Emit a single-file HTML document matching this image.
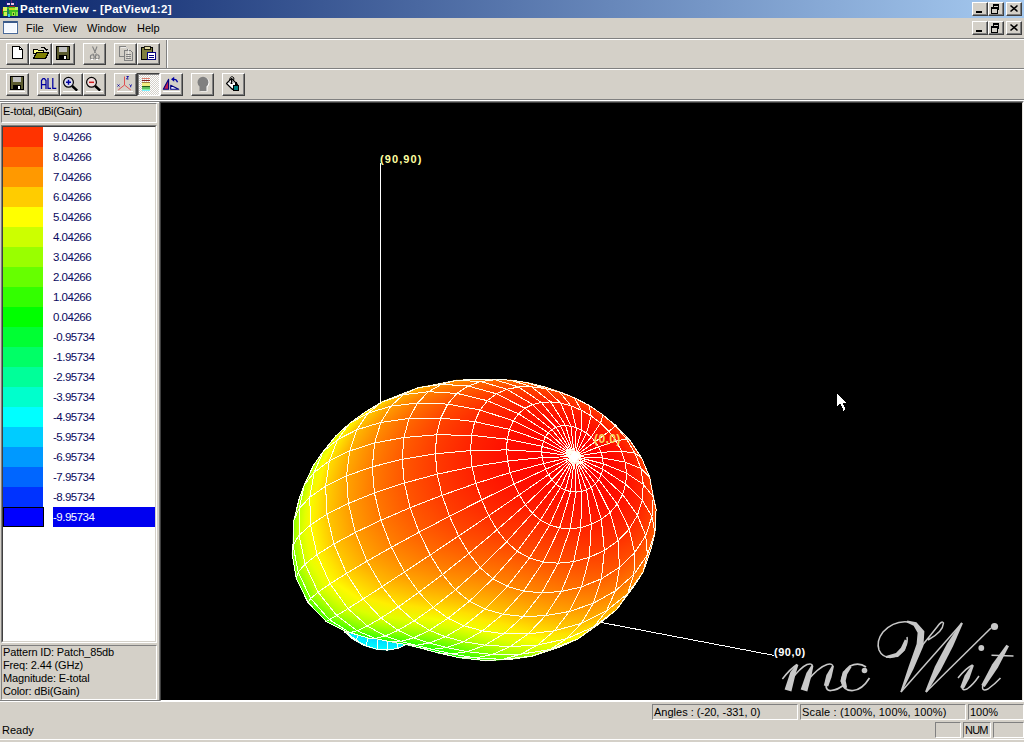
<!DOCTYPE html><html><head><meta charset="utf-8"><style>
*{margin:0;padding:0;box-sizing:border-box}
html,body{width:1024px;height:742px;overflow:hidden;background:#d4d0c8}
body{position:relative;font-family:'Liberation Sans',sans-serif;font-size:11px;color:#000}
.a{position:absolute}
.t{position:absolute;white-space:nowrap;line-height:12px}
.btn{position:absolute;border:1px solid;border-color:#fff #404040 #404040 #fff;box-shadow:inset -1px -1px #808080;background:#d4d0c8}
.cbtn{position:absolute;width:16px;height:14px;border:1px solid;border-color:#fff #404040 #404040 #fff;box-shadow:inset -1px -1px #808080;background:#d4d0c8}
.hl{position:absolute;height:1px}
.sunk{position:absolute;border:1px solid;border-color:#808080 #fff #fff #808080}
svg{position:absolute;overflow:visible}
.g{fill:none;stroke:#fffff0;stroke-width:1;shape-rendering:crispEdges}
.th{fill:none;stroke:#c8c8c8;stroke-width:1.5}
.c{fill:none;stroke:#c8c8c8;stroke-width:1.7}
.cthick{fill:none;stroke:#c8c8c8;stroke-width:3.5}
</style></head><body>
<div class="a" style="left:0;top:0;width:1024px;height:18px;background:linear-gradient(to right,#0a246a,#a6caf0)"></div>
<svg style="left:1px;top:0px" width="18" height="18" viewBox="0 0 18 18" shape-rendering="crispEdges">
<rect x="5" y="1" width="1" height="4" fill="#2a1a8a"/><rect x="10" y="0" width="1" height="5" fill="#5a2070"/><rect x="15" y="1" width="1" height="4" fill="#1a1a9a"/>
<rect x="6" y="3" width="3" height="2" fill="#f0d0f0"/><rect x="10" y="3" width="3" height="2" fill="#f0c0e0"/>
<rect x="8" y="6" width="6" height="2" fill="#a02020"/>
<rect x="2" y="7" width="15" height="9" fill="#40c020"/>
<rect x="2" y="7" width="4" height="4" fill="#e0f060"/><rect x="14" y="7" width="3" height="3" fill="#c0f060"/>
<rect x="8" y="8" width="6" height="2" fill="#c0e020"/>
<rect x="3" y="12" width="4" height="4" fill="#d0f050"/><rect x="6" y="9" width="2" height="7" fill="#208060"/><rect x="7" y="14" width="2" height="3" fill="#40c0e0"/>
<rect x="11" y="12" width="3" height="4" fill="#a0e040"/><rect x="12" y="13" width="1" height="2" fill="#106010"/>
<rect x="15" y="12" width="2" height="4" fill="#80e040"/><rect x="1" y="9" width="1" height="5" fill="#702020"/>
</svg>
<div class="t" style="left:20px;top:3px;font-weight:bold;font-size:11.5px;letter-spacing:.3px;color:#fff">PatternView - [PatView1:2]</div>
<div class="cbtn" style="left:972px;top:2px"></div><svg style="left:972px;top:2px" width="16" height="14" shape-rendering="crispEdges"><rect x="4" y="9" width="6" height="2" fill="#000"/></svg><div class="cbtn" style="left:988px;top:2px"></div><svg style="left:988px;top:2px" width="16" height="14" shape-rendering="crispEdges"><path d="M5 2h6v6h-2v-1h1v-3h-4v1h-1z" fill="#000"/><rect x="3" y="5" width="6" height="6" fill="none" stroke="#000" stroke-width="1" transform="translate(.5 .5)"/><rect x="3" y="5" width="6" height="1" fill="#000"/><rect x="3" y="5.5" width="6.5" height="1" fill="#000"/></svg><div class="cbtn" style="left:1006px;top:2px"></div><svg style="left:1006px;top:2px" width="16" height="14"><path d="M4.5 3.5l7 6M11.5 3.5l-7 6" stroke="#000" stroke-width="1.6"/></svg>
<svg style="left:1px;top:20px" width="18" height="15" shape-rendering="crispEdges">
<rect x="2" y="1" width="14" height="12" fill="#fff" stroke="#4a6a9a"/><rect x="2" y="1" width="14" height="2" fill="#3a5a8a"/><rect x="3" y="3" width="12" height="9" fill="#f4f8ff"/>
</svg>
<div class="t" style="left:26px;top:22px">File</div>
<div class="t" style="left:53px;top:22px">View</div>
<div class="t" style="left:87px;top:22px">Window</div>
<div class="t" style="left:137px;top:22px">Help</div>
<div class="cbtn" style="left:972px;top:21px"></div><svg style="left:972px;top:21px" width="16" height="14" shape-rendering="crispEdges"><rect x="4" y="9" width="6" height="2" fill="#000"/></svg><div class="cbtn" style="left:988px;top:21px"></div><svg style="left:988px;top:21px" width="16" height="14" shape-rendering="crispEdges"><path d="M5 2h6v6h-2v-1h1v-3h-4v1h-1z" fill="#000"/><rect x="3" y="5" width="6" height="6" fill="none" stroke="#000" stroke-width="1" transform="translate(.5 .5)"/><rect x="3" y="5" width="6" height="1" fill="#000"/><rect x="3" y="5.5" width="6.5" height="1" fill="#000"/></svg><div class="cbtn" style="left:1006px;top:21px"></div><svg style="left:1006px;top:21px" width="16" height="14"><path d="M4.5 3.5l7 6M11.5 3.5l-7 6" stroke="#000" stroke-width="1.6"/></svg>
<div class="hl" style="left:0;top:38px;width:1024px;background:#808080"></div>
<div class="hl" style="left:0;top:39px;width:1024px;background:#fff"></div>
<div class="btn" style="left:6px;top:43px;width:23px;height:22px"></div>
<div class="btn" style="left:29px;top:43px;width:23px;height:22px"></div>
<div class="btn" style="left:52px;top:43px;width:23px;height:22px"></div>
<div class="btn" style="left:83px;top:43px;width:23px;height:22px"></div>
<div class="btn" style="left:114px;top:43px;width:23px;height:22px"></div>
<div class="btn" style="left:137px;top:43px;width:23px;height:22px"></div>
<div class="a" style="left:166px;top:40px;width:1px;height:28px;background:#808080"></div>
<div class="a" style="left:167px;top:40px;width:1px;height:28px;background:#fff"></div>
<div class="hl" style="left:0;top:68px;width:1024px;background:#808080"></div>
<div class="hl" style="left:0;top:69px;width:1024px;background:#fff"></div>
<svg style="left:0;top:0" width="260" height="100" shape-rendering="crispEdges">
<!-- new -->
<path d="M12.5 46.5h7l3 3v9h-10z" fill="#fff" stroke="#000"/><path d="M19.5 46.5v3h3" fill="none" stroke="#000"/>
<!-- open -->
<path d="M33.5 49.5h4l1 1h5v3h-10z" fill="#ffff80" stroke="#000"/>
<path d="M33.5 58.5l3-6h12l-3 6z" fill="#808000" stroke="#000"/>
<path d="M41 47.5h3l2 2" fill="none" stroke="#000"/><path d="M45 49h3l-1.5 2z" fill="#000"/>
<!-- save -->
<rect x="56.5" y="46.5" width="13" height="13" fill="#5c5c30" stroke="#000"/>
<rect x="59" y="47" width="8" height="5" fill="#c0c0c0"/><rect x="59" y="55" width="8" height="5" fill="#000"/><rect x="64" y="56" width="2" height="3" fill="#fff"/>
<!-- cut disabled -->
<g shape-rendering="auto"><path d="M92.5 46.5l3 6.5M97 46.5l-2.5 6.5" stroke="#808080" stroke-width="1.1" fill="none"/>
<ellipse cx="92.3" cy="57" rx="1.9" ry="2.3" fill="none" stroke="#808080" stroke-width="1.1"/><ellipse cx="97.3" cy="57" rx="1.9" ry="2.3" fill="none" stroke="#808080" stroke-width="1.1"/>
<path d="M93 53.5l1 1.5M96.5 53.5l-1 1.5" stroke="#808080"/>
<path d="M91 59.5h2.5M96 59.5h2.5" stroke="#fff" stroke-width="1"/></g>
<!-- copy disabled -->
<path d="M119.5 46.5h6l2 2v8h-8z" fill="none" stroke="#808080"/><path d="M124.5 50.5h6l2 2v8h-8z" fill="#d4d0c8" stroke="#808080"/>
<path d="M120.5 47.5h6l2 2v8" fill="none" stroke="#fff" opacity=".6"/><path d="M126 54h5M126 56h5M126 58h5" stroke="#808080"/>
<!-- paste -->
<rect x="141.5" y="47.5" width="11" height="12" fill="#808040" stroke="#000"/><rect x="144" y="46" width="6" height="3" fill="#e0d8a0" stroke="#000" stroke-width=".8"/>
<rect x="147.5" y="52.5" width="8" height="7" fill="#fff" stroke="#000080"/><path d="M149 55h5M149 57h5" stroke="#000080"/>
</svg>
<div class="btn" style="left:6px;top:73px;width:23px;height:23px"></div>
<div class="btn" style="left:37px;top:73px;width:23px;height:23px"></div>
<div class="btn" style="left:60px;top:73px;width:23px;height:23px"></div>
<div class="btn" style="left:83px;top:73px;width:23px;height:23px"></div>
<div class="btn" style="left:114px;top:73px;width:23px;height:23px"></div>
<div class="btn" style="left:160px;top:73px;width:23px;height:23px"></div>
<div class="btn" style="left:191px;top:73px;width:23px;height:23px"></div>
<div class="btn" style="left:222px;top:73px;width:23px;height:23px"></div>
<div class="a" style="left:137px;top:73px;width:23px;height:23px;border:1px solid;border-color:#404040 #fff #fff #404040;box-shadow:inset 1px 1px #808080;background-color:#fff;background-image:linear-gradient(45deg,#d4d0c8 25%,transparent 25%,transparent 75%,#d4d0c8 75%),linear-gradient(45deg,#d4d0c8 25%,transparent 25%,transparent 75%,#d4d0c8 75%);background-size:2px 2px;background-position:0 0,1px 1px"></div>
<div class="hl" style="left:0;top:99px;width:1024px;background:#808080"></div>
<div class="hl" style="left:0;top:100px;width:1024px;background:#fff"></div>
<svg style="left:0;top:0" width="260" height="100" shape-rendering="crispEdges">
<!-- save2 -->
<rect x="10.5" y="76.5" width="13" height="13" fill="#5c5c30" stroke="#000"/>
<rect x="13" y="77" width="8" height="5" fill="#c0c0c0"/><rect x="13" y="85" width="8" height="5" fill="#000"/><rect x="18" y="86" width="2" height="3" fill="#fff"/>
<rect x="9" y="91" width="16" height="1" fill="#fff"/>
<!-- ALL -->
<g shape-rendering="auto" fill="none" stroke="#0000a0" stroke-width="1.25">
<path d="M41.5 89V80.5l1.5-2h1.5l1.5 2V89M41.5 84.5h4.5"/><path d="M48 78v10.3h3"/><path d="M52.8 78v10.3h3.5"/></g>
<rect x="40" y="91" width="17" height="1" fill="#fff"/>
<!-- zoom+ -->
<g shape-rendering="auto"><circle cx="68.5" cy="82.3" r="4.9" fill="#dcdcf0" stroke="#000" stroke-width="1.2"/>
<path d="M72.2 86l5 4.6" stroke="#000" stroke-width="2.4"/><path d="M66 82.3h5M68.5 79.8v5" stroke="#0000a0" stroke-width="1.5"/></g>
<rect x="63" y="91" width="17" height="1" fill="#fff"/>
<!-- zoom- -->
<g shape-rendering="auto"><circle cx="91.5" cy="82.3" r="4.9" fill="#f0dcdc" stroke="#000" stroke-width="1.2"/>
<path d="M95.2 86l5 4.6" stroke="#000" stroke-width="2.4"/><path d="M89 82.3h5" stroke="#d02020" stroke-width="1.5"/></g>
<rect x="86" y="91" width="17" height="1" fill="#fff"/>
<!-- axes -->
<g shape-rendering="auto"><path d="M124.5 76.5v8.5l-6.3 5M124.5 85l6.3 5" fill="none" stroke="#e05050" stroke-width="1"/>
<path d="M126.5 76.5h2l-2 2.5h2M117.5 84.5l2 2M119.5 84.5l-2 2M129.5 84.5l1.2 1.3 1.3-1.3M130.7 85.8v1.5" fill="none" stroke="#0000a0" stroke-width=".9"/></g>
<rect x="117" y="91" width="16" height="1" fill="#fff"/>
<!-- legend bars -->
<rect x="142" y="78" width="8" height="1" fill="#e08070"/><rect x="142" y="80" width="8" height="1" fill="#802020"/>
<rect x="142" y="82" width="8" height="1" fill="#a08040"/><rect x="142" y="83" width="8" height="3" fill="#f0f080"/>
<rect x="142" y="86" width="8" height="1" fill="#206020"/><rect x="142" y="87" width="8" height="2" fill="#60c060"/>
<rect x="142" y="89" width="8" height="1" fill="#80f0a0"/><rect x="142" y="90" width="8" height="1" fill="#80f0ff"/>
<!-- rotate -->
<g shape-rendering="auto"><path d="M163.3 89.3L168.6 79.3V89.3Z" fill="#c02050" stroke="#000080" stroke-width="1.1" stroke-linejoin="round"/>
<path d="M170.7 85.3V89.3H178.7Z" fill="#f0f0ff" stroke="#000080" stroke-width="1.1" stroke-linejoin="round"/>
<path d="M173 79.5c2-.5 3.8.3 4.5 2.8" fill="none" stroke="#0000a0" stroke-width="1.3"/><path d="M171 79.3l3.2-2.6v5z" fill="#0000a0"/></g>
<rect x="163" y="91" width="17" height="1" fill="#fff"/>
<!-- head disabled -->
<g shape-rendering="auto"><path d="M199.5 86.5a5.5 5.5 0 1 1 7 0V91h-7z" fill="#fff" transform="translate(1 .5)"/>
<path d="M199.5 86.5a5.5 5.5 0 1 1 7 0V91h-7z" fill="#808080"/></g>
<!-- paint -->
<g shape-rendering="auto"><path d="M226.5 83.5l5-5 6 6-5 5z" fill="#fff" stroke="#000" stroke-width="1.1" stroke-linejoin="round"/>
<path d="M229.5 80.5c0-3 2-4.5 3.5-3.5s1 3-.5 4.5" fill="none" stroke="#000" stroke-width="1"/>
<path d="M231.5 79v5M230 82.5l1.5 1.5 1.5-1.5" fill="none" stroke="#000" stroke-width="1"/></g>
<rect x="233.5" y="85.5" width="5" height="5" fill="#008080" stroke="#000"/><rect x="235" y="82" width="2" height="4" fill="#000"/>
</svg>
<div class="sunk" style="left:1px;top:103px;width:156px;height:20px"></div>
<div class="t" style="left:3px;top:105px;letter-spacing:-.3px">E-total, dBi(Gain)</div>
<div class="a" style="left:1px;top:125px;width:156px;height:518px;border:1px solid;border-color:#808080 #fff #fff #808080"></div>
<div class="a" style="left:2px;top:126px;width:154px;height:516px;border:1px solid;border-color:#404040 #d4d0c8 #d4d0c8 #404040;background:#fff"></div>
<div class="a" style="left:3px;top:127px;width:40px;height:20px;background:#ff3300"></div>
<div class="t" style="left:53px;top:131px;color:#0a0a60;font-size:11.5px;letter-spacing:-.5px">9.04266</div>
<div class="a" style="left:3px;top:147px;width:40px;height:20px;background:#ff6600"></div>
<div class="t" style="left:53px;top:151px;color:#0a0a60;font-size:11.5px;letter-spacing:-.5px">8.04266</div>
<div class="a" style="left:3px;top:167px;width:40px;height:20px;background:#ff9900"></div>
<div class="t" style="left:53px;top:171px;color:#0a0a60;font-size:11.5px;letter-spacing:-.5px">7.04266</div>
<div class="a" style="left:3px;top:187px;width:40px;height:20px;background:#ffcc00"></div>
<div class="t" style="left:53px;top:191px;color:#0a0a60;font-size:11.5px;letter-spacing:-.5px">6.04266</div>
<div class="a" style="left:3px;top:207px;width:40px;height:20px;background:#ffff00"></div>
<div class="t" style="left:53px;top:211px;color:#0a0a60;font-size:11.5px;letter-spacing:-.5px">5.04266</div>
<div class="a" style="left:3px;top:227px;width:40px;height:20px;background:#ccff00"></div>
<div class="t" style="left:53px;top:231px;color:#0a0a60;font-size:11.5px;letter-spacing:-.5px">4.04266</div>
<div class="a" style="left:3px;top:247px;width:40px;height:20px;background:#99ff00"></div>
<div class="t" style="left:53px;top:251px;color:#0a0a60;font-size:11.5px;letter-spacing:-.5px">3.04266</div>
<div class="a" style="left:3px;top:267px;width:40px;height:20px;background:#66ff00"></div>
<div class="t" style="left:53px;top:271px;color:#0a0a60;font-size:11.5px;letter-spacing:-.5px">2.04266</div>
<div class="a" style="left:3px;top:287px;width:40px;height:20px;background:#33ff00"></div>
<div class="t" style="left:53px;top:291px;color:#0a0a60;font-size:11.5px;letter-spacing:-.5px">1.04266</div>
<div class="a" style="left:3px;top:307px;width:40px;height:20px;background:#00ff00"></div>
<div class="t" style="left:53px;top:311px;color:#0a0a60;font-size:11.5px;letter-spacing:-.5px">0.04266</div>
<div class="a" style="left:3px;top:327px;width:40px;height:20px;background:#00ff33"></div>
<div class="t" style="left:53px;top:331px;color:#0a0a60;font-size:11.5px;letter-spacing:-.5px">-0.95734</div>
<div class="a" style="left:3px;top:347px;width:40px;height:20px;background:#00ff66"></div>
<div class="t" style="left:53px;top:351px;color:#0a0a60;font-size:11.5px;letter-spacing:-.5px">-1.95734</div>
<div class="a" style="left:3px;top:367px;width:40px;height:20px;background:#00ff99"></div>
<div class="t" style="left:53px;top:371px;color:#0a0a60;font-size:11.5px;letter-spacing:-.5px">-2.95734</div>
<div class="a" style="left:3px;top:387px;width:40px;height:20px;background:#00ffcc"></div>
<div class="t" style="left:53px;top:391px;color:#0a0a60;font-size:11.5px;letter-spacing:-.5px">-3.95734</div>
<div class="a" style="left:3px;top:407px;width:40px;height:20px;background:#00ffff"></div>
<div class="t" style="left:53px;top:411px;color:#0a0a60;font-size:11.5px;letter-spacing:-.5px">-4.95734</div>
<div class="a" style="left:3px;top:427px;width:40px;height:20px;background:#00ccff"></div>
<div class="t" style="left:53px;top:431px;color:#0a0a60;font-size:11.5px;letter-spacing:-.5px">-5.95734</div>
<div class="a" style="left:3px;top:447px;width:40px;height:20px;background:#0099ff"></div>
<div class="t" style="left:53px;top:451px;color:#0a0a60;font-size:11.5px;letter-spacing:-.5px">-6.95734</div>
<div class="a" style="left:3px;top:467px;width:40px;height:20px;background:#0066ff"></div>
<div class="t" style="left:53px;top:471px;color:#0a0a60;font-size:11.5px;letter-spacing:-.5px">-7.95734</div>
<div class="a" style="left:3px;top:487px;width:40px;height:20px;background:#0033ff"></div>
<div class="t" style="left:53px;top:491px;color:#0a0a60;font-size:11.5px;letter-spacing:-.5px">-8.95734</div>
<div class="a" style="left:53px;top:507px;width:102px;height:20px;background:#0000f0"></div>
<div class="a" style="left:3px;top:507px;width:41px;height:20px;border:1px solid #000;background:#0000ff"></div>
<div class="t" style="left:53px;top:511px;color:#fff;font-size:11.5px;letter-spacing:-.5px">-9.95734</div>
<div class="sunk" style="left:1px;top:645px;width:156px;height:55px"></div>
<div class="t" style="left:3px;top:646px;letter-spacing:-.15px">Pattern ID: Patch_85db</div>
<div class="t" style="left:3px;top:659px;letter-spacing:-.15px">Freq: 2.44 (GHz)</div>
<div class="t" style="left:3px;top:672px;letter-spacing:-.15px">Magnitude: E-total</div>
<div class="t" style="left:3px;top:685px;letter-spacing:-.15px">Color: dBi(Gain)</div>
<div class="hl" style="left:0;top:700px;width:161px;background:#808080"></div>
<div class="a" style="left:159px;top:101px;width:865px;height:601px;border:1px solid;border-color:#808080 #fff #fff #808080"></div>
<div class="a" style="left:160px;top:102px;width:863px;height:599px;border:1px solid;border-color:#404040 #e8e6e0 #fff #404040;background:#000;overflow:hidden"></div>
<div class="hl" style="left:0;top:101px;width:160px;background:#808080"></div>
<div class="hl" style="left:0;top:102px;width:159px;background:#fff"></div>
<div class="hl" style="left:0;top:701px;width:1024px;background:#fff"></div>
<svg style="left:0;top:0" width="1024" height="742"><defs><clipPath id="vp"><rect x="161" y="103" width="861" height="597"/></clipPath></defs><g clip-path="url(#vp)">
<path d="M380.5 163V420" stroke="#fff" stroke-width="1" shape-rendering="crispEdges"/>
<path d="M520 607L774.5 655.5" stroke="#fff" stroke-width="1" shape-rendering="crispEdges"/>
<linearGradient id="q1" gradientUnits="userSpaceOnUse" x1="386.5" y1="589.8" x2="402.7" y2="647.6"><stop offset="0" stop-color="#0022ff"/><stop offset="0.5" stop-color="#008dff"/><stop offset="1" stop-color="#00f9ff"/></linearGradient>
<path d="M383.4,591.4 398.1,648.2 407.3,644 384.7,590.3Z" fill="url(#q1)" stroke="url(#q1)" stroke-width=".6"/>
<path class="g" d="M383.4,591.4 398.1,648.2 407.3,644 384.7,590.3Z"/>
<linearGradient id="q2" gradientUnits="userSpaceOnUse" x1="386.5" y1="591.1" x2="391.9" y2="650"><stop offset="0" stop-color="#0024ff"/><stop offset="0.5" stop-color="#0090ff"/><stop offset="1" stop-color="#00fcff"/></linearGradient>
<path d="M381.8,591.8 387.8,650.1 398.1,648.2 383.4,591.4Z" fill="url(#q2)" stroke="url(#q2)" stroke-width=".6"/>
<path class="g" d="M381.8,591.8 387.8,650.1 398.1,648.2 383.4,591.4Z"/>
<linearGradient id="q3" gradientUnits="userSpaceOnUse" x1="358.4" y1="640.4" x2="357.6" y2="643.6"><stop offset="0" stop-color="#00e7ff"/><stop offset="0.5" stop-color="#00eaff"/><stop offset="1" stop-color="#00edff"/></linearGradient>
<path d="M354.1,639.7 352.5,638.8 361.7,644.1 363.8,645.3Z" fill="url(#q3)" stroke="url(#q3)" stroke-width=".6"/>
<path class="g" d="M354.1,639.7 352.5,638.8 361.7,644.1 363.8,645.3Z"/>
<linearGradient id="q4" gradientUnits="userSpaceOnUse" x1="370" y1="647.9" x2="370.6" y2="646.5"><stop offset="0" stop-color="#00f4ff"/><stop offset="0.5" stop-color="#00f6ff"/><stop offset="1" stop-color="#00f9ff"/></linearGradient>
<path d="M366.2,645.9 363.8,645.3 374.2,648.5 377,649.3Z" fill="url(#q4)" stroke="url(#q4)" stroke-width=".6"/>
<path class="g" d="M366.2,645.9 363.8,645.3 374.2,648.5 377,649.3Z"/>
<linearGradient id="q5" gradientUnits="userSpaceOnUse" x1="385.6" y1="592" x2="380.8" y2="649.9"><stop offset="0" stop-color="#0025ff"/><stop offset="0.5" stop-color="#0091ff"/><stop offset="1" stop-color="#00feff"/></linearGradient>
<path d="M380,591.6 377,649.3 387.8,650.1 381.8,591.8Z" fill="url(#q5)" stroke="url(#q5)" stroke-width=".6"/>
<path class="g" d="M380,591.6 377,649.3 387.8,650.1 381.8,591.8Z"/>
<linearGradient id="q6" gradientUnits="userSpaceOnUse" x1="348.7" y1="635.9" x2="349.4" y2="635.3"><stop offset="0" stop-color="#00e1ff"/><stop offset="0.5" stop-color="#00e7ff"/><stop offset="1" stop-color="#00edff"/></linearGradient>
<path d="M345.4,632.3 344.2,631.6 352.5,638.8 354.1,639.7Z" fill="url(#q6)" stroke="url(#q6)" stroke-width=".6"/>
<path class="g" d="M345.4,632.3 344.2,631.6 352.5,638.8 354.1,639.7Z"/>
<linearGradient id="q7" gradientUnits="userSpaceOnUse" x1="359.7" y1="643.3" x2="360.3" y2="642.3"><stop offset="0" stop-color="#00eeff"/><stop offset="0.5" stop-color="#00f4ff"/><stop offset="1" stop-color="#00faff"/></linearGradient>
<path d="M356,640.2 354.1,639.7 363.8,645.3 366.2,645.9Z" fill="url(#q7)" stroke="url(#q7)" stroke-width=".6"/>
<path class="g" d="M356,640.2 354.1,639.7 363.8,645.3 366.2,645.9Z"/>
<linearGradient id="q8" gradientUnits="userSpaceOnUse" x1="383.8" y1="592.4" x2="369.9" y2="647.5"><stop offset="0" stop-color="#0025ff"/><stop offset="0.5" stop-color="#0091ff"/><stop offset="1" stop-color="#00feff"/></linearGradient>
<path d="M378.2,591 366.2,645.9 377,649.3 380,591.6Z" fill="url(#q8)" stroke="url(#q8)" stroke-width=".6"/>
<path class="g" d="M378.2,591 366.2,645.9 377,649.3 380,591.6Z"/>
<linearGradient id="q9" gradientUnits="userSpaceOnUse" x1="350" y1="636.8" x2="351.2" y2="635.5"><stop offset="0" stop-color="#00e8ff"/><stop offset="0.5" stop-color="#00efff"/><stop offset="1" stop-color="#00f6ff"/></linearGradient>
<path d="M346.9,632.5 345.4,632.3 354.1,639.7 356,640.2Z" fill="url(#q9)" stroke="url(#q9)" stroke-width=".6"/>
<path class="g" d="M346.9,632.5 345.4,632.3 354.1,639.7 356,640.2Z"/>
<linearGradient id="q10" gradientUnits="userSpaceOnUse" x1="341.6" y1="628.5" x2="343.4" y2="627.3"><stop offset="0" stop-color="#00e0ff"/><stop offset="0.5" stop-color="#00e8ff"/><stop offset="1" stop-color="#00f0ff"/></linearGradient>
<path d="M339.4,623.3 338.2,623.4 345.4,632.3 346.9,632.5Z" fill="url(#q10)" stroke="url(#q10)" stroke-width=".6"/>
<path class="g" d="M339.4,623.3 338.2,623.4 345.4,632.3 346.9,632.5Z"/>
<linearGradient id="q11" gradientUnits="userSpaceOnUse" x1="381.2" y1="592.3" x2="359.5" y2="643"><stop offset="0" stop-color="#0025ff"/><stop offset="0.5" stop-color="#0091ff"/><stop offset="1" stop-color="#00fdff"/></linearGradient>
<path d="M376.5,590.3 356,640.2 366.2,645.9 378.2,591Z" fill="url(#q11)" stroke="url(#q11)" stroke-width=".6"/>
<path class="g" d="M376.5,590.3 356,640.2 366.2,645.9 378.2,591Z"/>
<linearGradient id="q12" gradientUnits="userSpaceOnUse" x1="378.2" y1="591.3" x2="350.1" y2="636.5"><stop offset="0" stop-color="#0025ff"/><stop offset="0.5" stop-color="#008fff"/><stop offset="1" stop-color="#00f9ff"/></linearGradient>
<path d="M374.8,589.3 346.9,632.5 356,640.2 376.5,590.3Z" fill="url(#q12)" stroke="url(#q12)" stroke-width=".6"/>
<path class="g" d="M374.8,589.3 346.9,632.5 356,640.2 376.5,590.3Z"/>
<linearGradient id="q13" gradientUnits="userSpaceOnUse" x1="375.2" y1="589.4" x2="342.1" y2="628.4"><stop offset="0" stop-color="#0025ff"/><stop offset="0.5" stop-color="#008cff"/><stop offset="1" stop-color="#00f3ff"/></linearGradient>
<path d="M373.3,587.8 339.4,623.3 346.9,632.5 374.8,589.3Z" fill="url(#q13)" stroke="url(#q13)" stroke-width=".6"/>
<path class="g" d="M373.3,587.8 339.4,623.3 346.9,632.5 374.8,589.3Z"/>
<linearGradient id="q14" gradientUnits="userSpaceOnUse" x1="508.1" y1="662.4" x2="508.7" y2="654.5"><stop offset="0" stop-color="#3eff00"/><stop offset="0.5" stop-color="#69ff00"/><stop offset="1" stop-color="#94ff00"/></linearGradient>
<path d="M502.7,659.4 485.4,660.6 513.3,659 531.9,656.2Z" fill="url(#q14)" stroke="url(#q14)" stroke-width=".6"/>
<path class="g" d="M502.7,659.4 485.4,660.6 513.3,659 531.9,656.2Z"/>
<linearGradient id="q15" gradientUnits="userSpaceOnUse" x1="480.1" y1="661.7" x2="481.3" y2="655.3"><stop offset="0" stop-color="#1fff00"/><stop offset="0.5" stop-color="#47ff00"/><stop offset="1" stop-color="#6fff00"/></linearGradient>
<path d="M475.3,657.9 459.5,657.7 485.4,660.6 502.7,659.4Z" fill="url(#q15)" stroke="url(#q15)" stroke-width=".6"/>
<path class="g" d="M475.3,657.9 459.5,657.7 485.4,660.6 502.7,659.4Z"/>
<linearGradient id="q16" gradientUnits="userSpaceOnUse" x1="455.2" y1="657.8" x2="456.7" y2="652.5"><stop offset="0" stop-color="#06ff00"/><stop offset="0.5" stop-color="#2aff00"/><stop offset="1" stop-color="#4dff00"/></linearGradient>
<path d="M451.7,653.9 437.6,652.8 459.5,657.7 475.3,657.9Z" fill="url(#q16)" stroke="url(#q16)" stroke-width=".6"/>
<path class="g" d="M451.7,653.9 437.6,652.8 459.5,657.7 475.3,657.9Z"/>
<linearGradient id="q17" gradientUnits="userSpaceOnUse" x1="434.7" y1="652.3" x2="435.6" y2="649.1"><stop offset="0" stop-color="#00ff08"/><stop offset="0.5" stop-color="#16ff00"/><stop offset="1" stop-color="#34ff00"/></linearGradient>
<path d="M432.2,649.3 419.8,647.9 437.6,652.8 451.7,653.9Z" fill="url(#q17)" stroke="url(#q17)" stroke-width=".6"/>
<path class="g" d="M432.2,649.3 419.8,647.9 437.6,652.8 451.7,653.9Z"/>
<linearGradient id="q18" gradientUnits="userSpaceOnUse" x1="417.9" y1="647.5" x2="418.3" y2="645.8"><stop offset="0" stop-color="#00ff09"/><stop offset="0.5" stop-color="#0eff00"/><stop offset="1" stop-color="#26ff00"/></linearGradient>
<path d="M416,645.3 405,644.4 419.8,647.9 432.2,649.3Z" fill="url(#q18)" stroke="url(#q18)" stroke-width=".6"/>
<path class="g" d="M416,645.3 405,644.4 419.8,647.9 432.2,649.3Z"/>
<linearGradient id="q19" gradientUnits="userSpaceOnUse" x1="555.8" y1="651.9" x2="554.2" y2="643.2"><stop offset="0" stop-color="#a0ff00"/><stop offset="0.5" stop-color="#ccff00"/><stop offset="1" stop-color="#f9ff00"/></linearGradient>
<path d="M549.9,649.6 531.9,656.2 559.9,646.9 578,638.9Z" fill="url(#q19)" stroke="url(#q19)" stroke-width=".6"/>
<path class="g" d="M549.9,649.6 531.9,656.2 559.9,646.9 578,638.9Z"/>
<linearGradient id="q20" gradientUnits="userSpaceOnUse" x1="403.1" y1="644" x2="403.4" y2="641.9"><stop offset="0" stop-color="#05ff00"/><stop offset="0.5" stop-color="#22ff00"/><stop offset="1" stop-color="#40ff00"/></linearGradient>
<path d="M401.1,641.4 391,641.9 405,644.4 416,645.3Z" fill="url(#q20)" stroke="url(#q20)" stroke-width=".6"/>
<path class="g" d="M401.1,641.4 391,641.9 405,644.4 416,645.3Z"/>
<linearGradient id="q21" gradientUnits="userSpaceOnUse" x1="526.2" y1="659.6" x2="526.3" y2="649.3"><stop offset="0" stop-color="#72ff00"/><stop offset="0.5" stop-color="#a6ff00"/><stop offset="1" stop-color="#dbff00"/></linearGradient>
<path d="M520.4,654.3 502.7,659.4 531.9,656.2 549.9,649.6Z" fill="url(#q21)" stroke="url(#q21)" stroke-width=".6"/>
<path class="g" d="M520.4,654.3 502.7,659.4 531.9,656.2 549.9,649.6Z"/>
<linearGradient id="q22" gradientUnits="userSpaceOnUse" x1="496.6" y1="661.9" x2="498.8" y2="650.3"><stop offset="0" stop-color="#4bff00"/><stop offset="0.5" stop-color="#7eff00"/><stop offset="1" stop-color="#b0ff00"/></linearGradient>
<path d="M492.3,654.5 475.3,657.9 502.7,659.4 520.4,654.3Z" fill="url(#q22)" stroke="url(#q22)" stroke-width=".6"/>
<path class="g" d="M492.3,654.5 475.3,657.9 502.7,659.4 520.4,654.3Z"/>
<linearGradient id="q23" gradientUnits="userSpaceOnUse" x1="470.2" y1="659.1" x2="473.1" y2="649"><stop offset="0" stop-color="#32ff00"/><stop offset="0.5" stop-color="#5cff00"/><stop offset="1" stop-color="#87ff00"/></linearGradient>
<path d="M467.5,651.7 451.7,653.9 475.3,657.9 492.3,654.5Z" fill="url(#q23)" stroke="url(#q23)" stroke-width=".6"/>
<path class="g" d="M467.5,651.7 451.7,653.9 475.3,657.9 492.3,654.5Z"/>
<linearGradient id="q24" gradientUnits="userSpaceOnUse" x1="448.3" y1="654.1" x2="450.5" y2="646.6"><stop offset="0" stop-color="#25ff00"/><stop offset="0.5" stop-color="#47ff00"/><stop offset="1" stop-color="#69ff00"/></linearGradient>
<path d="M446.8,647.6 432.2,649.3 451.7,653.9 467.5,651.7Z" fill="url(#q24)" stroke="url(#q24)" stroke-width=".6"/>
<path class="g" d="M446.8,647.6 432.2,649.3 451.7,653.9 467.5,651.7Z"/>
<linearGradient id="q25" gradientUnits="userSpaceOnUse" x1="430.3" y1="648.9" x2="431.6" y2="643.5"><stop offset="0" stop-color="#24ff00"/><stop offset="0.5" stop-color="#40ff00"/><stop offset="1" stop-color="#5dff00"/></linearGradient>
<path d="M429.4,643 416,645.3 432.2,649.3 446.8,647.6Z" fill="url(#q25)" stroke="url(#q25)" stroke-width=".6"/>
<path class="g" d="M429.4,643 416,645.3 432.2,649.3 446.8,647.6Z"/>
<linearGradient id="q26" gradientUnits="userSpaceOnUse" x1="337.2" y1="628.1" x2="339" y2="624.1"><stop offset="0" stop-color="#16ff00"/><stop offset="0.5" stop-color="#3cff00"/><stop offset="1" stop-color="#62ff00"/></linearGradient>
<path d="M329.4,619.7 326,621.3 346.1,631.8 350,632.7Z" fill="url(#q26)" stroke="url(#q26)" stroke-width=".6"/>
<path class="g" d="M329.4,619.7 326,621.3 346.1,631.8 350,632.7Z"/>
<linearGradient id="q27" gradientUnits="userSpaceOnUse" x1="599.5" y1="627.6" x2="595.7" y2="620.5"><stop offset="0" stop-color="#fcff00"/><stop offset="0.5" stop-color="#ffe000"/><stop offset="1" stop-color="#ffbe00"/></linearGradient>
<path d="M593.8,626.9 578,638.9 601.7,622 616.7,609.5Z" fill="url(#q27)" stroke="url(#q27)" stroke-width=".6"/>
<path class="g" d="M593.8,626.9 578,638.9 601.7,622 616.7,609.5Z"/>
<linearGradient id="q28" gradientUnits="userSpaceOnUse" x1="362.5" y1="636.8" x2="363.5" y2="632.2"><stop offset="0" stop-color="#15ff00"/><stop offset="0.5" stop-color="#3fff00"/><stop offset="1" stop-color="#69ff00"/></linearGradient>
<path d="M357.1,630.8 350,632.7 368.5,638.1 375.5,638.5Z" fill="url(#q28)" stroke="url(#q28)" stroke-width=".6"/>
<path class="g" d="M357.1,630.8 350,632.7 368.5,638.1 375.5,638.5Z"/>
<linearGradient id="q29" gradientUnits="userSpaceOnUse" x1="388" y1="641.5" x2="388.7" y2="636.5"><stop offset="0" stop-color="#17ff00"/><stop offset="0.5" stop-color="#40ff00"/><stop offset="1" stop-color="#69ff00"/></linearGradient>
<path d="M385.3,636 375.5,638.5 391,641.9 401.1,641.4Z" fill="url(#q29)" stroke="url(#q29)" stroke-width=".6"/>
<path class="g" d="M385.3,636 375.5,638.5 391,641.9 401.1,641.4Z"/>
<linearGradient id="q30" gradientUnits="userSpaceOnUse" x1="573.5" y1="643.9" x2="570.7" y2="632.4"><stop offset="0" stop-color="#daff00"/><stop offset="0.5" stop-color="#fffa00"/><stop offset="1" stop-color="#ffd100"/></linearGradient>
<path d="M566.6,638.7 549.9,649.6 578,638.9 593.8,626.9Z" fill="url(#q30)" stroke="url(#q30)" stroke-width=".6"/>
<path class="g" d="M566.6,638.7 549.9,649.6 578,638.9 593.8,626.9Z"/>
<linearGradient id="q31" gradientUnits="userSpaceOnUse" x1="414.4" y1="645" x2="415.6" y2="638.1"><stop offset="0" stop-color="#29ff00"/><stop offset="0.5" stop-color="#50ff00"/><stop offset="1" stop-color="#77ff00"/></linearGradient>
<path d="M413.8,637.8 401.1,641.4 416,645.3 429.4,643Z" fill="url(#q31)" stroke="url(#q31)" stroke-width=".6"/>
<path class="g" d="M413.8,637.8 401.1,641.4 416,645.3 429.4,643Z"/>
<linearGradient id="q32" gradientUnits="userSpaceOnUse" x1="543.4" y1="655.2" x2="544" y2="637.8"><stop offset="0" stop-color="#b3ff00"/><stop offset="0.5" stop-color="#e2ff00"/><stop offset="1" stop-color="#ffed00"/></linearGradient>
<path d="M537.8,645 520.4,654.3 549.9,649.6 566.6,638.7Z" fill="url(#q32)" stroke="url(#q32)" stroke-width=".6"/>
<path class="g" d="M537.8,645 520.4,654.3 549.9,649.6 566.6,638.7Z"/>
<linearGradient id="q33" gradientUnits="userSpaceOnUse" x1="513.4" y1="658.6" x2="516.9" y2="640.9"><stop offset="0" stop-color="#8bff00"/><stop offset="0.5" stop-color="#bfff00"/><stop offset="1" stop-color="#f3ff00"/></linearGradient>
<path d="M510,646.7 492.3,654.5 520.4,654.3 537.8,645Z" fill="url(#q33)" stroke="url(#q33)" stroke-width=".6"/>
<path class="g" d="M510,646.7 492.3,654.5 520.4,654.3 537.8,645Z"/>
<linearGradient id="q34" gradientUnits="userSpaceOnUse" x1="486.5" y1="656.9" x2="490.8" y2="641.4"><stop offset="0" stop-color="#6bff00"/><stop offset="0.5" stop-color="#9eff00"/><stop offset="1" stop-color="#d1ff00"/></linearGradient>
<path d="M485,645.2 467.5,651.7 492.3,654.5 510,646.7Z" fill="url(#q34)" stroke="url(#q34)" stroke-width=".6"/>
<path class="g" d="M485,645.2 467.5,651.7 492.3,654.5 510,646.7Z"/>
<linearGradient id="q35" gradientUnits="userSpaceOnUse" x1="316.4" y1="612.8" x2="321" y2="607.7"><stop offset="0" stop-color="#35ff00"/><stop offset="0.5" stop-color="#5eff00"/><stop offset="1" stop-color="#87ff00"/></linearGradient>
<path d="M310.7,598.5 308,602.5 326,621.3 329.4,619.7Z" fill="url(#q35)" stroke="url(#q35)" stroke-width=".6"/>
<path class="g" d="M310.7,598.5 308,602.5 326,621.3 329.4,619.7Z"/>
<linearGradient id="q36" gradientUnits="userSpaceOnUse" x1="463.9" y1="652.4" x2="467.4" y2="640.2"><stop offset="0" stop-color="#5bff00"/><stop offset="0.5" stop-color="#87ff00"/><stop offset="1" stop-color="#b4ff00"/></linearGradient>
<path d="M463.6,641.7 446.8,647.6 467.5,651.7 485,645.2Z" fill="url(#q36)" stroke="url(#q36)" stroke-width=".6"/>
<path class="g" d="M463.6,641.7 446.8,647.6 467.5,651.7 485,645.2Z"/>
<linearGradient id="q37" gradientUnits="userSpaceOnUse" x1="292.7" y1="562.7" x2="296.4" y2="562"><stop offset="0" stop-color="#49ff00"/><stop offset="0.5" stop-color="#6eff00"/><stop offset="1" stop-color="#93ff00"/></linearGradient>
<path d="M293,545 292.1,553.9 296.3,578.6 298.2,572.1Z" fill="url(#q37)" stroke="url(#q37)" stroke-width=".6"/>
<path class="g" d="M293,545 292.1,553.9 296.3,578.6 298.2,572.1Z"/>
<linearGradient id="q38" gradientUnits="userSpaceOnUse" x1="632.7" y1="593" x2="627.6" y2="588.1"><stop offset="0" stop-color="#ffb900"/><stop offset="0.5" stop-color="#ffa100"/><stop offset="1" stop-color="#ff8900"/></linearGradient>
<path d="M627.7,593.6 616.7,609.5 633.1,587.4 643,572.3Z" fill="url(#q38)" stroke="url(#q38)" stroke-width=".6"/>
<path class="g" d="M627.7,593.6 616.7,609.5 633.1,587.4 643,572.3Z"/>
<linearGradient id="q39" gradientUnits="userSpaceOnUse" x1="297.7" y1="502.4" x2="300.6" y2="503.1"><stop offset="0" stop-color="#6eff00"/><stop offset="0.5" stop-color="#96ff00"/><stop offset="1" stop-color="#bfff00"/></linearGradient>
<path d="M304.3,484.9 299.4,498 293.9,520 299.2,508.6Z" fill="url(#q39)" stroke="url(#q39)" stroke-width=".6"/>
<path class="g" d="M304.3,484.9 299.4,498 293.9,520 299.2,508.6Z"/>
<linearGradient id="q40" gradientUnits="userSpaceOnUse" x1="300.4" y1="589.4" x2="305.7" y2="586.6"><stop offset="0" stop-color="#47ff00"/><stop offset="0.5" stop-color="#6dff00"/><stop offset="1" stop-color="#93ff00"/></linearGradient>
<path d="M298.2,572.1 296.3,578.6 308,602.5 310.7,598.5Z" fill="url(#q40)" stroke="url(#q40)" stroke-width=".6"/>
<path class="g" d="M298.2,572.1 296.3,578.6 308,602.5 310.7,598.5Z"/>
<linearGradient id="q41" gradientUnits="userSpaceOnUse" x1="445" y1="647.1" x2="447.4" y2="637.3"><stop offset="0" stop-color="#5aff00"/><stop offset="0.5" stop-color="#81ff00"/><stop offset="1" stop-color="#a8ff00"/></linearGradient>
<path d="M445.5,636.8 429.4,643 446.8,647.6 463.6,641.7Z" fill="url(#q41)" stroke="url(#q41)" stroke-width=".6"/>
<path class="g" d="M445.5,636.8 429.4,643 446.8,647.6 463.6,641.7Z"/>
<linearGradient id="q42" gradientUnits="userSpaceOnUse" x1="341.5" y1="629.2" x2="345.6" y2="619.1"><stop offset="0" stop-color="#37ff00"/><stop offset="0.5" stop-color="#6bff00"/><stop offset="1" stop-color="#9fff00"/></linearGradient>
<path d="M336.7,615.5 329.4,619.7 350,632.7 357.1,630.8Z" fill="url(#q42)" stroke="url(#q42)" stroke-width=".6"/>
<path class="g" d="M336.7,615.5 329.4,619.7 350,632.7 357.1,630.8Z"/>
<linearGradient id="q43" gradientUnits="userSpaceOnUse" x1="370.5" y1="637.6" x2="372.5" y2="626.9"><stop offset="0" stop-color="#36ff00"/><stop offset="0.5" stop-color="#6cff00"/><stop offset="1" stop-color="#a3ff00"/></linearGradient>
<path d="M367.4,626 357.1,630.8 375.5,638.5 385.3,636Z" fill="url(#q43)" stroke="url(#q43)" stroke-width=".6"/>
<path class="g" d="M367.4,626 357.1,630.8 375.5,638.5 385.3,636Z"/>
<linearGradient id="q44" gradientUnits="userSpaceOnUse" x1="614.1" y1="614.8" x2="608.3" y2="605.1"><stop offset="0" stop-color="#ffd000"/><stop offset="0.5" stop-color="#ffb000"/><stop offset="1" stop-color="#ff9000"/></linearGradient>
<path d="M606.5,610.8 593.8,626.9 616.7,609.5 627.7,593.6Z" fill="url(#q44)" stroke="url(#q44)" stroke-width=".6"/>
<path class="g" d="M606.5,610.8 593.8,626.9 616.7,609.5 627.7,593.6Z"/>
<linearGradient id="q45" gradientUnits="userSpaceOnUse" x1="398.9" y1="641.2" x2="400.3" y2="630.6"><stop offset="0" stop-color="#3fff00"/><stop offset="0.5" stop-color="#73ff00"/><stop offset="1" stop-color="#a7ff00"/></linearGradient>
<path d="M398.1,630.3 385.3,636 401.1,641.4 413.8,637.8Z" fill="url(#q45)" stroke="url(#q45)" stroke-width=".6"/>
<path class="g" d="M398.1,630.3 385.3,636 401.1,641.4 413.8,637.8Z"/>
<linearGradient id="q46" gradientUnits="userSpaceOnUse" x1="311.9" y1="467.5" x2="315.7" y2="469.4"><stop offset="0" stop-color="#9aff00"/><stop offset="0.5" stop-color="#c4ff00"/><stop offset="1" stop-color="#edff00"/></linearGradient>
<path d="M323.2,451.6 313.6,465.1 304.3,484.9 314.2,472.4Z" fill="url(#q46)" stroke="url(#q46)" stroke-width=".6"/>
<path class="g" d="M323.2,451.6 313.6,465.1 304.3,484.9 314.2,472.4Z"/>
<linearGradient id="q47" gradientUnits="userSpaceOnUse" x1="589.1" y1="633.8" x2="585.2" y2="615.4"><stop offset="0" stop-color="#ffee00"/><stop offset="0.5" stop-color="#ffc700"/><stop offset="1" stop-color="#ffa000"/></linearGradient>
<path d="M581.3,623.3 566.6,638.7 593.8,626.9 606.5,610.8Z" fill="url(#q47)" stroke="url(#q47)" stroke-width=".6"/>
<path class="g" d="M581.3,623.3 566.6,638.7 593.8,626.9 606.5,610.8Z"/>
<linearGradient id="q48" gradientUnits="userSpaceOnUse" x1="293.1" y1="526.9" x2="299.6" y2="527.4"><stop offset="0" stop-color="#7dff00"/><stop offset="0.5" stop-color="#a6ff00"/><stop offset="1" stop-color="#d0ff00"/></linearGradient>
<path d="M299.2,508.6 293.9,520 293,545 299.1,535.3Z" fill="url(#q48)" stroke="url(#q48)" stroke-width=".6"/>
<path class="g" d="M299.2,508.6 293.9,520 293,545 299.1,535.3Z"/>
<linearGradient id="q49" gradientUnits="userSpaceOnUse" x1="428.4" y1="642.9" x2="430.5" y2="630.5"><stop offset="0" stop-color="#60ff00"/><stop offset="0.5" stop-color="#91ff00"/><stop offset="1" stop-color="#c2ff00"/></linearGradient>
<path d="M429.4,630.3 413.8,637.8 429.4,643 445.5,636.8Z" fill="url(#q49)" stroke="url(#q49)" stroke-width=".6"/>
<path class="g" d="M429.4,630.3 413.8,637.8 429.4,643 445.5,636.8Z"/>
<linearGradient id="q50" gradientUnits="userSpaceOnUse" x1="334.9" y1="436.1" x2="338.2" y2="438.9"><stop offset="0" stop-color="#c6ff00"/><stop offset="0.5" stop-color="#ecff00"/><stop offset="1" stop-color="#ffed00"/></linearGradient>
<path d="M349.7,423.3 335.8,435.9 323.2,451.6 337.6,439.6Z" fill="url(#q50)" stroke="url(#q50)" stroke-width=".6"/>
<path class="g" d="M349.7,423.3 335.8,435.9 323.2,451.6 337.6,439.6Z"/>
<linearGradient id="q51" gradientUnits="userSpaceOnUse" x1="651.1" y1="552.8" x2="647.5" y2="551.3"><stop offset="0" stop-color="#ff8600"/><stop offset="0.5" stop-color="#ff7200"/><stop offset="1" stop-color="#ff5d00"/></linearGradient>
<path d="M647.4,554.8 643,572.3 651.3,548.2 654.9,532.9Z" fill="url(#q51)" stroke="url(#q51)" stroke-width=".6"/>
<path class="g" d="M647.4,554.8 643,572.3 651.3,548.2 654.9,532.9Z"/>
<linearGradient id="q52" gradientUnits="userSpaceOnUse" x1="559.7" y1="645.8" x2="560.6" y2="622.5"><stop offset="0" stop-color="#f0ff00"/><stop offset="0.5" stop-color="#ffe300"/><stop offset="1" stop-color="#ffb800"/></linearGradient>
<path d="M554.4,630.8 537.8,645 566.6,638.7 581.3,623.3Z" fill="url(#q52)" stroke="url(#q52)" stroke-width=".6"/>
<path class="g" d="M554.4,630.8 537.8,645 566.6,638.7 581.3,623.3Z"/>
<linearGradient id="q53" gradientUnits="userSpaceOnUse" x1="530.3" y1="650.7" x2="535" y2="627"><stop offset="0" stop-color="#d1ff00"/><stop offset="0.5" stop-color="#feff00"/><stop offset="1" stop-color="#ffd300"/></linearGradient>
<path d="M528,634 510,646.7 537.8,645 554.4,630.8Z" fill="url(#q53)" stroke="url(#q53)" stroke-width=".6"/>
<path class="g" d="M528,634 510,646.7 537.8,645 554.4,630.8Z"/>
<linearGradient id="q54" gradientUnits="userSpaceOnUse" x1="503.9" y1="650.3" x2="509.6" y2="629.1"><stop offset="0" stop-color="#b6ff00"/><stop offset="0.5" stop-color="#e4ff00"/><stop offset="1" stop-color="#ffec00"/></linearGradient>
<path d="M503.8,633.8 485,645.2 510,646.7 528,634Z" fill="url(#q54)" stroke="url(#q54)" stroke-width=".6"/>
<path class="g" d="M503.8,633.8 485,645.2 510,646.7 528,634Z"/>
<linearGradient id="q55" gradientUnits="userSpaceOnUse" x1="365" y1="411.3" x2="366.9" y2="414"><stop offset="0" stop-color="#ebff00"/><stop offset="0.5" stop-color="#fff000"/><stop offset="1" stop-color="#ffcd00"/></linearGradient>
<path d="M381.9,401.9 364.5,412.5 349.7,423.3 368,413.2Z" fill="url(#q55)" stroke="url(#q55)" stroke-width=".6"/>
<path class="g" d="M381.9,401.9 364.5,412.5 349.7,423.3 368,413.2Z"/>
<linearGradient id="q56" gradientUnits="userSpaceOnUse" x1="319.5" y1="611.7" x2="328.5" y2="600.6"><stop offset="0" stop-color="#64ff00"/><stop offset="0.5" stop-color="#96ff00"/><stop offset="1" stop-color="#c8ff00"/></linearGradient>
<path d="M318.1,592.2 310.7,598.5 329.4,619.7 336.7,615.5Z" fill="url(#q56)" stroke="url(#q56)" stroke-width=".6"/>
<path class="g" d="M318.1,592.2 310.7,598.5 329.4,619.7 336.7,615.5Z"/>
<linearGradient id="q57" gradientUnits="userSpaceOnUse" x1="481.2" y1="646.7" x2="486.2" y2="628.8"><stop offset="0" stop-color="#a6ff00"/><stop offset="0.5" stop-color="#d2ff00"/><stop offset="1" stop-color="#feff00"/></linearGradient>
<path d="M482.5,630.9 463.6,641.7 485,645.2 503.8,633.8Z" fill="url(#q57)" stroke="url(#q57)" stroke-width=".6"/>
<path class="g" d="M482.5,630.9 463.6,641.7 485,645.2 503.8,633.8Z"/>
<linearGradient id="q58" gradientUnits="userSpaceOnUse" x1="294.1" y1="554.8" x2="303.3" y2="553.3"><stop offset="0" stop-color="#89ff00"/><stop offset="0.5" stop-color="#afff00"/><stop offset="1" stop-color="#d5ff00"/></linearGradient>
<path d="M299.1,535.3 293,545 298.2,572.1 305.1,564.1Z" fill="url(#q58)" stroke="url(#q58)" stroke-width=".6"/>
<path class="g" d="M299.1,535.3 293,545 298.2,572.1 305.1,564.1Z"/>
<linearGradient id="q59" gradientUnits="userSpaceOnUse" x1="641.8" y1="576.9" x2="634.2" y2="570.5"><stop offset="0" stop-color="#ff9100"/><stop offset="0.5" stop-color="#ff7900"/><stop offset="1" stop-color="#ff6100"/></linearGradient>
<path d="M633.9,574.5 627.7,593.6 643,572.3 647.4,554.8Z" fill="url(#q59)" stroke="url(#q59)" stroke-width=".6"/>
<path class="g" d="M633.9,574.5 627.7,593.6 643,572.3 647.4,554.8Z"/>
<linearGradient id="q60" gradientUnits="userSpaceOnUse" x1="303" y1="489.6" x2="311.2" y2="491.9"><stop offset="0" stop-color="#afff00"/><stop offset="0.5" stop-color="#d5ff00"/><stop offset="1" stop-color="#fcff00"/></linearGradient>
<path d="M314.2,472.4 304.3,484.9 299.2,508.6 309.8,497.2Z" fill="url(#q60)" stroke="url(#q60)" stroke-width=".6"/>
<path class="g" d="M314.2,472.4 304.3,484.9 299.2,508.6 309.8,497.2Z"/>
<linearGradient id="q61" gradientUnits="userSpaceOnUse" x1="399.6" y1="393.8" x2="400.6" y2="396"><stop offset="0" stop-color="#ffed00"/><stop offset="0.5" stop-color="#ffd100"/><stop offset="1" stop-color="#ffb600"/></linearGradient>
<path d="M417.9,387.8 397.7,395.7 381.9,401.9 403.3,394.7Z" fill="url(#q61)" stroke="url(#q61)" stroke-width=".6"/>
<path class="g" d="M417.9,387.8 397.7,395.7 381.9,401.9 403.3,394.7Z"/>
<linearGradient id="q62" gradientUnits="userSpaceOnUse" x1="656.8" y1="492.7" x2="649" y2="492.3"><stop offset="0" stop-color="#ff5c00"/><stop offset="0.5" stop-color="#ff5400"/><stop offset="1" stop-color="#ff4c00"/></linearGradient>
<path d="M653.2,496.8 656.1,509.8 651.4,486.8 649.6,476.9Z" fill="url(#q62)" stroke="url(#q62)" stroke-width=".6"/>
<path class="g" d="M653.2,496.8 656.1,509.8 651.4,486.8 649.6,476.9Z"/>
<linearGradient id="q63" gradientUnits="userSpaceOnUse" x1="302.9" y1="584.5" x2="313.3" y2="578.7"><stop offset="0" stop-color="#87ff00"/><stop offset="0.5" stop-color="#aeff00"/><stop offset="1" stop-color="#d4ff00"/></linearGradient>
<path d="M305.1,564.1 298.2,572.1 310.7,598.5 318.1,592.2Z" fill="url(#q63)" stroke="url(#q63)" stroke-width=".6"/>
<path class="g" d="M305.1,564.1 298.2,572.1 310.7,598.5 318.1,592.2Z"/>
<linearGradient id="q64" gradientUnits="userSpaceOnUse" x1="349.5" y1="628.1" x2="355.5" y2="611.2"><stop offset="0" stop-color="#68ff00"/><stop offset="0.5" stop-color="#a3ff00"/><stop offset="1" stop-color="#deff00"/></linearGradient>
<path d="M348,608.6 336.7,615.5 357.1,630.8 367.4,626Z" fill="url(#q64)" stroke="url(#q64)" stroke-width=".6"/>
<path class="g" d="M348,608.6 336.7,615.5 357.1,630.8 367.4,626Z"/>
<linearGradient id="q65" gradientUnits="userSpaceOnUse" x1="381.7" y1="635.4" x2="384.5" y2="618.6"><stop offset="0" stop-color="#69ff00"/><stop offset="0.5" stop-color="#a6ff00"/><stop offset="1" stop-color="#e3ff00"/></linearGradient>
<path d="M381.1,618 367.4,626 385.3,636 398.1,630.3Z" fill="url(#q65)" stroke="url(#q65)" stroke-width=".6"/>
<path class="g" d="M381.1,618 367.4,626 385.3,636 398.1,630.3Z"/>
<linearGradient id="q66" gradientUnits="userSpaceOnUse" x1="462" y1="641.3" x2="465.7" y2="626.1"><stop offset="0" stop-color="#a5ff00"/><stop offset="0.5" stop-color="#cdff00"/><stop offset="1" stop-color="#f5ff00"/></linearGradient>
<path d="M464.1,625.8 445.5,636.8 463.6,641.7 482.5,630.9Z" fill="url(#q66)" stroke="url(#q66)" stroke-width=".6"/>
<path class="g" d="M464.1,625.8 445.5,636.8 463.6,641.7 482.5,630.9Z"/>
<linearGradient id="q67" gradientUnits="userSpaceOnUse" x1="412.8" y1="637.7" x2="415" y2="621.1"><stop offset="0" stop-color="#7bff00"/><stop offset="0.5" stop-color="#b4ff00"/><stop offset="1" stop-color="#ecff00"/></linearGradient>
<path d="M414.1,620.9 398.1,630.3 413.8,637.8 429.4,630.3Z" fill="url(#q67)" stroke="url(#q67)" stroke-width=".6"/>
<path class="g" d="M414.1,620.9 398.1,630.3 413.8,637.8 429.4,630.3Z"/>
<linearGradient id="q68" gradientUnits="userSpaceOnUse" x1="625.5" y1="600.4" x2="616.5" y2="584.1"><stop offset="0" stop-color="#ffa300"/><stop offset="0.5" stop-color="#ff8700"/><stop offset="1" stop-color="#ff6b00"/></linearGradient>
<path d="M615.4,590.9 606.5,610.8 627.7,593.6 633.9,574.5Z" fill="url(#q68)" stroke="url(#q68)" stroke-width=".6"/>
<path class="g" d="M615.4,590.9 606.5,610.8 627.7,593.6 633.9,574.5Z"/>
<linearGradient id="q69" gradientUnits="userSpaceOnUse" x1="322" y1="453.8" x2="330.6" y2="458.5"><stop offset="0" stop-color="#daff00"/><stop offset="0.5" stop-color="#fdff00"/><stop offset="1" stop-color="#ffde00"/></linearGradient>
<path d="M337.6,439.6 323.2,451.6 314.2,472.4 329.4,460.9Z" fill="url(#q69)" stroke="url(#q69)" stroke-width=".6"/>
<path class="g" d="M337.6,439.6 323.2,451.6 314.2,472.4 329.4,460.9Z"/>
<linearGradient id="q70" gradientUnits="userSpaceOnUse" x1="436.8" y1="382.7" x2="437.5" y2="385.5"><stop offset="0" stop-color="#ffc800"/><stop offset="0.5" stop-color="#ffb100"/><stop offset="1" stop-color="#ff9b00"/></linearGradient>
<path d="M456.1,380.4 433.8,384.9 417.9,387.8 441.5,384.3Z" fill="url(#q70)" stroke="url(#q70)" stroke-width=".6"/>
<path class="g" d="M456.1,380.4 433.8,384.9 417.9,387.8 441.5,384.3Z"/>
<linearGradient id="q71" gradientUnits="userSpaceOnUse" x1="656.7" y1="514.2" x2="652.1" y2="513.9"><stop offset="0" stop-color="#ff6100"/><stop offset="0.5" stop-color="#ff5000"/><stop offset="1" stop-color="#ff3e00"/></linearGradient>
<path d="M652,516.6 654.9,532.9 656.1,509.8 653.2,496.8Z" fill="url(#q71)" stroke="url(#q71)" stroke-width=".6"/>
<path class="g" d="M652,516.6 654.9,532.9 656.1,509.8 653.2,496.8Z"/>
<linearGradient id="q72" gradientUnits="userSpaceOnUse" x1="601.6" y1="619.6" x2="597" y2="594.2"><stop offset="0" stop-color="#ffb800"/><stop offset="0.5" stop-color="#ff9800"/><stop offset="1" stop-color="#ff7900"/></linearGradient>
<path d="M593.3,603.3 581.3,623.3 606.5,610.8 615.4,590.9Z" fill="url(#q72)" stroke="url(#q72)" stroke-width=".6"/>
<path class="g" d="M593.3,603.3 581.3,623.3 606.5,610.8 615.4,590.9Z"/>
<linearGradient id="q73" gradientUnits="userSpaceOnUse" x1="298.7" y1="516" x2="311.1" y2="516.9"><stop offset="0" stop-color="#c0ff00"/><stop offset="0.5" stop-color="#e3ff00"/><stop offset="1" stop-color="#fff800"/></linearGradient>
<path d="M309.8,497.2 299.2,508.6 299.1,535.3 310.5,525Z" fill="url(#q73)" stroke="url(#q73)" stroke-width=".6"/>
<path class="g" d="M309.8,497.2 299.2,508.6 299.1,535.3 310.5,525Z"/>
<linearGradient id="q74" gradientUnits="userSpaceOnUse" x1="349.6" y1="423.3" x2="356.8" y2="429.8"><stop offset="0" stop-color="#fdff00"/><stop offset="0.5" stop-color="#ffdd00"/><stop offset="1" stop-color="#ffb900"/></linearGradient>
<path d="M368,413.2 349.7,423.3 337.6,439.6 356.9,429.7Z" fill="url(#q74)" stroke="url(#q74)" stroke-width=".6"/>
<path class="g" d="M368,413.2 349.7,423.3 337.6,439.6 356.9,429.7Z"/>
<linearGradient id="q75" gradientUnits="userSpaceOnUse" x1="609.7" y1="415.7" x2="607" y2="422.9"><stop offset="0" stop-color="#ff5600"/><stop offset="0.5" stop-color="#ff4e00"/><stop offset="1" stop-color="#ff4600"/></linearGradient>
<path d="M615.5,426 615.4,425 598.7,411.9 602.8,414.7Z" fill="url(#q75)" stroke="url(#q75)" stroke-width=".6"/>
<path class="g" d="M615.5,426 615.4,425 598.7,411.9 602.8,414.7Z"/>
<linearGradient id="q76" gradientUnits="userSpaceOnUse" x1="445" y1="636.7" x2="448.4" y2="618.3"><stop offset="0" stop-color="#abff00"/><stop offset="0.5" stop-color="#daff00"/><stop offset="1" stop-color="#fff600"/></linearGradient>
<path d="M448,618.3 429.4,630.3 445.5,636.8 464.1,625.8Z" fill="url(#q76)" stroke="url(#q76)" stroke-width=".6"/>
<path class="g" d="M448,618.3 429.4,630.3 445.5,636.8 464.1,625.8Z"/>
<linearGradient id="q77" gradientUnits="userSpaceOnUse" x1="574" y1="631.8" x2="575.5" y2="602.4"><stop offset="0" stop-color="#ffd200"/><stop offset="0.5" stop-color="#ffae00"/><stop offset="1" stop-color="#ff8900"/></linearGradient>
<path d="M569.4,611.5 554.4,630.8 581.3,623.3 593.3,603.3Z" fill="url(#q77)" stroke="url(#q77)" stroke-width=".6"/>
<path class="g" d="M569.4,611.5 554.4,630.8 581.3,623.3 593.3,603.3Z"/>
<linearGradient id="q78" gradientUnits="userSpaceOnUse" x1="622.8" y1="431.8" x2="621.2" y2="433.3"><stop offset="0" stop-color="#ff5300"/><stop offset="0.5" stop-color="#ff4300"/><stop offset="1" stop-color="#ff3300"/></linearGradient>
<path d="M626.5,438.9 630,440.5 615.4,425 615.5,426Z" fill="url(#q78)" stroke="url(#q78)" stroke-width=".6"/>
<path class="g" d="M626.5,438.9 630,440.5 615.4,425 615.5,426Z"/>
<linearGradient id="q79" gradientUnits="userSpaceOnUse" x1="654.8" y1="536.8" x2="645.5" y2="533.1"><stop offset="0" stop-color="#ff6300"/><stop offset="0.5" stop-color="#ff5100"/><stop offset="1" stop-color="#ff3e00"/></linearGradient>
<path d="M645.7,535.6 647.4,554.8 654.9,532.9 652,516.6Z" fill="url(#q79)" stroke="url(#q79)" stroke-width=".6"/>
<path class="g" d="M645.7,535.6 647.4,554.8 654.9,532.9 652,516.6Z"/>
<linearGradient id="q80" gradientUnits="userSpaceOnUse" x1="560.2" y1="386.5" x2="560.4" y2="398"><stop offset="0" stop-color="#ff7900"/><stop offset="0.5" stop-color="#ff6100"/><stop offset="1" stop-color="#ff4900"/></linearGradient>
<path d="M574.3,397.8 562.4,392.9 544.2,386.8 559.7,392.2Z" fill="url(#q80)" stroke="url(#q80)" stroke-width=".6"/>
<path class="g" d="M574.3,397.8 562.4,392.9 544.2,386.8 559.7,392.2Z"/>
<linearGradient id="q81" gradientUnits="userSpaceOnUse" x1="546.9" y1="637.4" x2="552" y2="608.4"><stop offset="0" stop-color="#ffed00"/><stop offset="0.5" stop-color="#ffc400"/><stop offset="1" stop-color="#ff9b00"/></linearGradient>
<path d="M545.5,615.7 528,634 554.4,630.8 569.4,611.5Z" fill="url(#q81)" stroke="url(#q81)" stroke-width=".6"/>
<path class="g" d="M545.5,615.7 528,634 554.4,630.8 569.4,611.5Z"/>
<linearGradient id="q82" gradientUnits="userSpaceOnUse" x1="383.8" y1="400.7" x2="388.4" y2="407.7"><stop offset="0" stop-color="#ffde00"/><stop offset="0.5" stop-color="#ffbc00"/><stop offset="1" stop-color="#ff9a00"/></linearGradient>
<path d="M403.3,394.7 381.9,401.9 368,413.2 390.8,406.2Z" fill="url(#q82)" stroke="url(#q82)" stroke-width=".6"/>
<path class="g" d="M403.3,394.7 381.9,401.9 368,413.2 390.8,406.2Z"/>
<linearGradient id="q83" gradientUnits="userSpaceOnUse" x1="634.7" y1="446.8" x2="632" y2="448.6"><stop offset="0" stop-color="#ff4d00"/><stop offset="0.5" stop-color="#ff3b00"/><stop offset="1" stop-color="#ff2900"/></linearGradient>
<path d="M635.1,453.2 641.6,458 630,440.5 626.5,438.9Z" fill="url(#q83)" stroke="url(#q83)" stroke-width=".6"/>
<path class="g" d="M635.1,453.2 641.6,458 630,440.5 626.5,438.9Z"/>
<linearGradient id="q84" gradientUnits="userSpaceOnUse" x1="327" y1="608.4" x2="339.9" y2="591"><stop offset="0" stop-color="#a2ff00"/><stop offset="0.5" stop-color="#d1ff00"/><stop offset="1" stop-color="#fffe00"/></linearGradient>
<path d="M330.1,583.8 318.1,592.2 336.7,615.5 348,608.6Z" fill="url(#q84)" stroke="url(#q84)" stroke-width=".6"/>
<path class="g" d="M330.1,583.8 318.1,592.2 336.7,615.5 348,608.6Z"/>
<linearGradient id="q85" gradientUnits="userSpaceOnUse" x1="475.6" y1="378.5" x2="476" y2="381.9"><stop offset="0" stop-color="#ffa100"/><stop offset="0.5" stop-color="#ff8700"/><stop offset="1" stop-color="#ff6d00"/></linearGradient>
<path d="M494.9,379.7 471.9,379.5 456.1,380.4 480.8,381.5Z" fill="url(#q85)" stroke="url(#q85)" stroke-width=".6"/>
<path class="g" d="M494.9,379.7 471.9,379.5 456.1,380.4 480.8,381.5Z"/>
<linearGradient id="q86" gradientUnits="userSpaceOnUse" x1="521.9" y1="638.2" x2="528.4" y2="611.6"><stop offset="0" stop-color="#fcff00"/><stop offset="0.5" stop-color="#ffd700"/><stop offset="1" stop-color="#ffad00"/></linearGradient>
<path d="M523.1,616.5 503.8,633.8 528,634 545.5,615.7Z" fill="url(#q86)" stroke="url(#q86)" stroke-width=".6"/>
<path class="g" d="M523.1,616.5 503.8,633.8 528,634 545.5,615.7Z"/>
<linearGradient id="q87" gradientUnits="userSpaceOnUse" x1="544.3" y1="385.5" x2="543.7" y2="389.5"><stop offset="0" stop-color="#ff7900"/><stop offset="0.5" stop-color="#ff5f00"/><stop offset="1" stop-color="#ff4500"/></linearGradient>
<path d="M559.7,392.2 544.2,386.8 526.8,382.5 545.3,388.6Z" fill="url(#q87)" stroke="url(#q87)" stroke-width=".6"/>
<path class="g" d="M559.7,392.2 544.2,386.8 526.8,382.5 545.3,388.6Z"/>
<linearGradient id="q88" gradientUnits="userSpaceOnUse" x1="300.6" y1="545.9" x2="315.1" y2="543.4"><stop offset="0" stop-color="#cdff00"/><stop offset="0.5" stop-color="#ebff00"/><stop offset="1" stop-color="#fff500"/></linearGradient>
<path d="M310.5,525 299.1,535.3 305.1,564.1 317.1,554.6Z" fill="url(#q88)" stroke="url(#q88)" stroke-width=".6"/>
<path class="g" d="M310.5,525 299.1,535.3 305.1,564.1 317.1,554.6Z"/>
<linearGradient id="q89" gradientUnits="userSpaceOnUse" x1="312.9" y1="477.1" x2="327.1" y2="481.2"><stop offset="0" stop-color="#eaff00"/><stop offset="0.5" stop-color="#fff300"/><stop offset="1" stop-color="#ffd100"/></linearGradient>
<path d="M329.4,460.9 314.2,472.4 309.8,497.2 325.6,486.2Z" fill="url(#q89)" stroke="url(#q89)" stroke-width=".6"/>
<path class="g" d="M329.4,460.9 314.2,472.4 309.8,497.2 325.6,486.2Z"/>
<linearGradient id="q90" gradientUnits="userSpaceOnUse" x1="647" y1="560.2" x2="634" y2="548.3"><stop offset="0" stop-color="#ff6b00"/><stop offset="0.5" stop-color="#ff5600"/><stop offset="1" stop-color="#ff4100"/></linearGradient>
<path d="M634.6,552.8 633.9,574.5 647.4,554.8 645.7,535.6Z" fill="url(#q90)" stroke="url(#q90)" stroke-width=".6"/>
<path class="g" d="M634.6,552.8 633.9,574.5 647.4,554.8 645.7,535.6Z"/>
<linearGradient id="q91" gradientUnits="userSpaceOnUse" x1="644.3" y1="463.1" x2="639.4" y2="465.3"><stop offset="0" stop-color="#ff4700"/><stop offset="0.5" stop-color="#ff3700"/><stop offset="1" stop-color="#ff2600"/></linearGradient>
<path d="M640.9,468.5 649.6,476.9 641.6,458 635.1,453.2Z" fill="url(#q91)" stroke="url(#q91)" stroke-width=".6"/>
<path class="g" d="M640.9,468.5 649.6,476.9 641.6,458 635.1,453.2Z"/>
<linearGradient id="q92" gradientUnits="userSpaceOnUse" x1="421.5" y1="386.4" x2="424.1" y2="393.3"><stop offset="0" stop-color="#ffbb00"/><stop offset="0.5" stop-color="#ff9d00"/><stop offset="1" stop-color="#ff7f00"/></linearGradient>
<path d="M441.5,384.3 417.9,387.8 403.3,394.7 428.5,391.7Z" fill="url(#q92)" stroke="url(#q92)" stroke-width=".6"/>
<path class="g" d="M441.5,384.3 417.9,387.8 403.3,394.7 428.5,391.7Z"/>
<linearGradient id="q93" gradientUnits="userSpaceOnUse" x1="499.9" y1="635.5" x2="506.2" y2="612"><stop offset="0" stop-color="#f1ff00"/><stop offset="0.5" stop-color="#ffe500"/><stop offset="1" stop-color="#ffbe00"/></linearGradient>
<path d="M502.8,614.2 482.5,630.9 503.8,633.8 523.1,616.5Z" fill="url(#q93)" stroke="url(#q93)" stroke-width=".6"/>
<path class="g" d="M502.8,614.2 482.5,630.9 503.8,633.8 523.1,616.5Z"/>
<linearGradient id="q94" gradientUnits="userSpaceOnUse" x1="361.4" y1="624.1" x2="368.7" y2="600.7"><stop offset="0" stop-color="#a6ff00"/><stop offset="0.5" stop-color="#dcff00"/><stop offset="1" stop-color="#ffec00"/></linearGradient>
<path d="M363.1,599 348,608.6 367.4,626 381.1,618Z" fill="url(#q94)" stroke="url(#q94)" stroke-width=".6"/>
<path class="g" d="M363.1,599 348,608.6 367.4,626 381.1,618Z"/>
<linearGradient id="q95" gradientUnits="userSpaceOnUse" x1="396.2" y1="630" x2="399.6" y2="607.1"><stop offset="0" stop-color="#abff00"/><stop offset="0.5" stop-color="#e2ff00"/><stop offset="1" stop-color="#ffe600"/></linearGradient>
<path d="M398.3,606.9 381.1,618 398.1,630.3 414.1,620.9Z" fill="url(#q95)" stroke="url(#q95)" stroke-width=".6"/>
<path class="g" d="M398.3,606.9 381.1,618 398.1,630.3 414.1,620.9Z"/>
<linearGradient id="q96" gradientUnits="userSpaceOnUse" x1="309.8" y1="578.3" x2="325.6" y2="568.8"><stop offset="0" stop-color="#c7ff00"/><stop offset="0.5" stop-color="#e8ff00"/><stop offset="1" stop-color="#fff500"/></linearGradient>
<path d="M317.1,554.6 305.1,564.1 318.1,592.2 330.1,583.8Z" fill="url(#q96)" stroke="url(#q96)" stroke-width=".6"/>
<path class="g" d="M317.1,554.6 305.1,564.1 318.1,592.2 330.1,583.8Z"/>
<linearGradient id="q97" gradientUnits="userSpaceOnUse" x1="528.7" y1="382.1" x2="528.2" y2="386.7"><stop offset="0" stop-color="#ff7900"/><stop offset="0.5" stop-color="#ff6100"/><stop offset="1" stop-color="#ff4800"/></linearGradient>
<path d="M545.3,388.6 526.8,382.5 510.3,380.1 531.5,386.8Z" fill="url(#q97)" stroke="url(#q97)" stroke-width=".6"/>
<path class="g" d="M545.3,388.6 526.8,382.5 510.3,380.1 531.5,386.8Z"/>
<linearGradient id="q98" gradientUnits="userSpaceOnUse" x1="650.7" y1="480.8" x2="642.9" y2="482.5"><stop offset="0" stop-color="#ff4300"/><stop offset="0.5" stop-color="#ff3300"/><stop offset="1" stop-color="#ff2400"/></linearGradient>
<path d="M643.3,484.4 653.2,496.8 649.6,476.9 640.9,468.5Z" fill="url(#q98)" stroke="url(#q98)" stroke-width=".6"/>
<path class="g" d="M643.3,484.4 653.2,496.8 649.6,476.9 640.9,468.5Z"/>
<linearGradient id="q99" gradientUnits="userSpaceOnUse" x1="429.6" y1="630.3" x2="432.7" y2="607.5"><stop offset="0" stop-color="#c4ff00"/><stop offset="0.5" stop-color="#f5ff00"/><stop offset="1" stop-color="#ffd800"/></linearGradient>
<path d="M433.2,607.5 414.1,620.9 429.4,630.3 448,618.3Z" fill="url(#q99)" stroke="url(#q99)" stroke-width=".6"/>
<path class="g" d="M433.2,607.5 414.1,620.9 429.4,630.3 448,618.3Z"/>
<linearGradient id="q100" gradientUnits="userSpaceOnUse" x1="631.8" y1="582.7" x2="620.4" y2="559.9"><stop offset="0" stop-color="#ff7900"/><stop offset="0.5" stop-color="#ff6100"/><stop offset="1" stop-color="#ff4800"/></linearGradient>
<path d="M619.5,567.4 615.4,590.9 633.9,574.5 634.6,552.8Z" fill="url(#q100)" stroke="url(#q100)" stroke-width=".6"/>
<path class="g" d="M619.5,567.4 615.4,590.9 633.9,574.5 634.6,552.8Z"/>
<linearGradient id="q101" gradientUnits="userSpaceOnUse" x1="481" y1="630.5" x2="486.1" y2="609.4"><stop offset="0" stop-color="#f1ff00"/><stop offset="0.5" stop-color="#ffe900"/><stop offset="1" stop-color="#ffc400"/></linearGradient>
<path d="M485,609.1 464.1,625.8 482.5,630.9 502.8,614.2Z" fill="url(#q101)" stroke="url(#q101)" stroke-width=".6"/>
<path class="g" d="M485,609.1 464.1,625.8 482.5,630.9 502.8,614.2Z"/>
<linearGradient id="q102" gradientUnits="userSpaceOnUse" x1="336.6" y1="441.4" x2="350.5" y2="449.3"><stop offset="0" stop-color="#ffef00"/><stop offset="0.5" stop-color="#ffcd00"/><stop offset="1" stop-color="#ffab00"/></linearGradient>
<path d="M356.9,429.7 337.6,439.6 329.4,460.9 349.6,450.9Z" fill="url(#q102)" stroke="url(#q102)" stroke-width=".6"/>
<path class="g" d="M356.9,429.7 337.6,439.6 329.4,460.9 349.6,450.9Z"/>
<linearGradient id="q103" gradientUnits="userSpaceOnUse" x1="460.8" y1="379.5" x2="462.3" y2="387.1"><stop offset="0" stop-color="#ff9800"/><stop offset="0.5" stop-color="#ff7d00"/><stop offset="1" stop-color="#ff6100"/></linearGradient>
<path d="M480.8,381.5 456.1,380.4 441.5,384.3 468,386Z" fill="url(#q103)" stroke="url(#q103)" stroke-width=".6"/>
<path class="g" d="M480.8,381.5 456.1,380.4 441.5,384.3 468,386Z"/>
<linearGradient id="q104" gradientUnits="userSpaceOnUse" x1="610.3" y1="600.4" x2="605" y2="569.9"><stop offset="0" stop-color="#ff8b00"/><stop offset="0.5" stop-color="#ff6e00"/><stop offset="1" stop-color="#ff5200"/></linearGradient>
<path d="M601.4,578.8 593.3,603.3 615.4,590.9 619.5,567.4Z" fill="url(#q104)" stroke="url(#q104)" stroke-width=".6"/>
<path class="g" d="M601.4,578.8 593.3,603.3 615.4,590.9 619.5,567.4Z"/>
<linearGradient id="q105" gradientUnits="userSpaceOnUse" x1="653.6" y1="499.8" x2="642.3" y2="499.1"><stop offset="0" stop-color="#ff4100"/><stop offset="0.5" stop-color="#ff3200"/><stop offset="1" stop-color="#ff2400"/></linearGradient>
<path d="M642.2,500.1 652,516.6 653.2,496.8 643.3,484.4Z" fill="url(#q105)" stroke="url(#q105)" stroke-width=".6"/>
<path class="g" d="M642.2,500.1 652,516.6 653.2,496.8 643.3,484.4Z"/>
<linearGradient id="q106" gradientUnits="userSpaceOnUse" x1="513.9" y1="379.9" x2="513.7" y2="386.9"><stop offset="0" stop-color="#ff7700"/><stop offset="0.5" stop-color="#ff5e00"/><stop offset="1" stop-color="#ff4500"/></linearGradient>
<path d="M531.5,386.8 510.3,380.1 494.9,379.7 518.7,387Z" fill="url(#q106)" stroke="url(#q106)" stroke-width=".6"/>
<path class="g" d="M531.5,386.8 510.3,380.1 494.9,379.7 518.7,387Z"/>
<linearGradient id="q107" gradientUnits="userSpaceOnUse" x1="368.7" y1="412.5" x2="379.9" y2="423.5"><stop offset="0" stop-color="#ffcb00"/><stop offset="0.5" stop-color="#ffac00"/><stop offset="1" stop-color="#ff8e00"/></linearGradient>
<path d="M390.8,406.2 368,413.2 356.9,429.7 380.9,422.4Z" fill="url(#q107)" stroke="url(#q107)" stroke-width=".6"/>
<path class="g" d="M390.8,406.2 368,413.2 356.9,429.7 380.9,422.4Z"/>
<linearGradient id="q108" gradientUnits="userSpaceOnUse" x1="309.2" y1="504.8" x2="327.6" y2="506.3"><stop offset="0" stop-color="#f8ff00"/><stop offset="0.5" stop-color="#ffe600"/><stop offset="1" stop-color="#ffc700"/></linearGradient>
<path d="M325.6,486.2 309.8,497.2 310.5,525 327,514.2Z" fill="url(#q108)" stroke="url(#q108)" stroke-width=".6"/>
<path class="g" d="M325.6,486.2 309.8,497.2 310.5,525 327,514.2Z"/>
<linearGradient id="q109" gradientUnits="userSpaceOnUse" x1="586.1" y1="612" x2="587.1" y2="578.4"><stop offset="0" stop-color="#ff9d00"/><stop offset="0.5" stop-color="#ff7e00"/><stop offset="1" stop-color="#ff5f00"/></linearGradient>
<path d="M581.5,586.9 569.4,611.5 593.3,603.3 601.4,578.8Z" fill="url(#q109)" stroke="url(#q109)" stroke-width=".6"/>
<path class="g" d="M581.5,586.9 569.4,611.5 593.3,603.3 601.4,578.8Z"/>
<linearGradient id="q110" gradientUnits="userSpaceOnUse" x1="464.2" y1="625.8" x2="469" y2="601.1"><stop offset="0" stop-color="#f4ff00"/><stop offset="0.5" stop-color="#ffe000"/><stop offset="1" stop-color="#ffb600"/></linearGradient>
<path d="M469.4,601.2 448,618.3 464.1,625.8 485,609.1Z" fill="url(#q110)" stroke="url(#q110)" stroke-width=".6"/>
<path class="g" d="M469.4,601.2 448,618.3 464.1,625.8 485,609.1Z"/>
<linearGradient id="q111" gradientUnits="userSpaceOnUse" x1="406.4" y1="392.9" x2="413.8" y2="405.2"><stop offset="0" stop-color="#ffac00"/><stop offset="0.5" stop-color="#ff9000"/><stop offset="1" stop-color="#ff7300"/></linearGradient>
<path d="M428.5,391.7 403.3,394.7 390.8,406.2 417.5,403Z" fill="url(#q111)" stroke="url(#q111)" stroke-width=".6"/>
<path class="g" d="M428.5,391.7 403.3,394.7 390.8,406.2 417.5,403Z"/>
<linearGradient id="q112" gradientUnits="userSpaceOnUse" x1="652.2" y1="520.1" x2="636.6" y2="513.5"><stop offset="0" stop-color="#ff4200"/><stop offset="0.5" stop-color="#ff3300"/><stop offset="1" stop-color="#ff2400"/></linearGradient>
<path d="M637.5,515.2 645.7,535.6 652,516.6 642.2,500.1Z" fill="url(#q112)" stroke="url(#q112)" stroke-width=".6"/>
<path class="g" d="M637.5,515.2 645.7,535.6 652,516.6 642.2,500.1Z"/>
<linearGradient id="q113" gradientUnits="userSpaceOnUse" x1="339.2" y1="602.7" x2="355" y2="579"><stop offset="0" stop-color="#dcff00"/><stop offset="0.5" stop-color="#fff900"/><stop offset="1" stop-color="#ffd000"/></linearGradient>
<path d="M346.5,573.4 330.1,583.8 348,608.6 363.1,599Z" fill="url(#q113)" stroke="url(#q113)" stroke-width=".6"/>
<path class="g" d="M346.5,573.4 330.1,583.8 348,608.6 363.1,599Z"/>
<linearGradient id="q114" gradientUnits="userSpaceOnUse" x1="561.9" y1="618.3" x2="567.2" y2="584.6"><stop offset="0" stop-color="#ffae00"/><stop offset="0.5" stop-color="#ff8e00"/><stop offset="1" stop-color="#ff6d00"/></linearGradient>
<path d="M561.3,591.5 545.5,615.7 569.4,611.5 581.5,586.9Z" fill="url(#q114)" stroke="url(#q114)" stroke-width=".6"/>
<path class="g" d="M561.3,591.5 545.5,615.7 569.4,611.5 581.5,586.9Z"/>
<linearGradient id="q115" gradientUnits="userSpaceOnUse" x1="598.3" y1="410.9" x2="593.5" y2="418.9"><stop offset="0" stop-color="#ff4000"/><stop offset="0.5" stop-color="#ff2d00"/><stop offset="1" stop-color="#ff1b00"/></linearGradient>
<path d="M600.6,423 602.8,414.7 588.9,405.3 591.2,415.9Z" fill="url(#q115)" stroke="url(#q115)" stroke-width=".6"/>
<path class="g" d="M600.6,423 602.8,414.7 588.9,405.3 591.2,415.9Z"/>
<linearGradient id="q116" gradientUnits="userSpaceOnUse" x1="609.9" y1="420.2" x2="604.1" y2="427.7"><stop offset="0" stop-color="#ff3b00"/><stop offset="0.5" stop-color="#ff2900"/><stop offset="1" stop-color="#ff1800"/></linearGradient>
<path d="M609,431.4 615.5,426 602.8,414.7 600.6,423Z" fill="url(#q116)" stroke="url(#q116)" stroke-width=".6"/>
<path class="g" d="M609,431.4 615.5,426 602.8,414.7 600.6,423Z"/>
<linearGradient id="q117" gradientUnits="userSpaceOnUse" x1="585.9" y1="403" x2="582" y2="411.8"><stop offset="0" stop-color="#ff4500"/><stop offset="0.5" stop-color="#ff3100"/><stop offset="1" stop-color="#ff1d00"/></linearGradient>
<path d="M591.2,415.9 588.9,405.3 574.3,397.8 581.2,410.1Z" fill="url(#q117)" stroke="url(#q117)" stroke-width=".6"/>
<path class="g" d="M591.2,415.9 588.9,405.3 574.3,397.8 581.2,410.1Z"/>
<linearGradient id="q118" gradientUnits="userSpaceOnUse" x1="499.9" y1="379.3" x2="500.7" y2="389.7"><stop offset="0" stop-color="#ff7200"/><stop offset="0.5" stop-color="#ff5900"/><stop offset="1" stop-color="#ff4000"/></linearGradient>
<path d="M518.7,387 494.9,379.7 480.8,381.5 506.9,389.3Z" fill="url(#q118)" stroke="url(#q118)" stroke-width=".6"/>
<path class="g" d="M518.7,387 494.9,379.7 480.8,381.5 506.9,389.3Z"/>
<linearGradient id="q119" gradientUnits="userSpaceOnUse" x1="620.4" y1="430.9" x2="613.2" y2="438"><stop offset="0" stop-color="#ff3500"/><stop offset="0.5" stop-color="#ff2500"/><stop offset="1" stop-color="#ff1500"/></linearGradient>
<path d="M616.1,440.9 626.5,438.9 615.5,426 609,431.4Z" fill="url(#q119)" stroke="url(#q119)" stroke-width=".6"/>
<path class="g" d="M616.1,440.9 626.5,438.9 615.5,426 609,431.4Z"/>
<linearGradient id="q120" gradientUnits="userSpaceOnUse" x1="328" y1="465.4" x2="347.9" y2="471.6"><stop offset="0" stop-color="#ffdf00"/><stop offset="0.5" stop-color="#ffc000"/><stop offset="1" stop-color="#ffa100"/></linearGradient>
<path d="M349.6,450.9 329.4,460.9 325.6,486.2 346.6,475.9Z" fill="url(#q120)" stroke="url(#q120)" stroke-width=".6"/>
<path class="g" d="M349.6,450.9 329.4,460.9 325.6,486.2 346.6,475.9Z"/>
<linearGradient id="q121" gradientUnits="userSpaceOnUse" x1="539.1" y1="620.4" x2="547" y2="588"><stop offset="0" stop-color="#ffbd00"/><stop offset="0.5" stop-color="#ff9b00"/><stop offset="1" stop-color="#ff7900"/></linearGradient>
<path d="M541.7,592.9 523.1,616.5 545.5,615.7 561.3,591.5Z" fill="url(#q121)" stroke="url(#q121)" stroke-width=".6"/>
<path class="g" d="M541.7,592.9 523.1,616.5 545.5,615.7 561.3,591.5Z"/>
<linearGradient id="q122" gradientUnits="userSpaceOnUse" x1="312.3" y1="536.2" x2="331.8" y2="532.6"><stop offset="0" stop-color="#fffb00"/><stop offset="0.5" stop-color="#ffdf00"/><stop offset="1" stop-color="#ffc400"/></linearGradient>
<path d="M327,514.2 310.5,525 317.1,554.6 333.9,544Z" fill="url(#q122)" stroke="url(#q122)" stroke-width=".6"/>
<path class="g" d="M327,514.2 310.5,525 317.1,554.6 333.9,544Z"/>
<linearGradient id="q123" gradientUnits="userSpaceOnUse" x1="377" y1="616.8" x2="385.4" y2="587.7"><stop offset="0" stop-color="#e0ff00"/><stop offset="0.5" stop-color="#ffee00"/><stop offset="1" stop-color="#ffbf00"/></linearGradient>
<path d="M382,586.7 363.1,599 381.1,618 398.3,606.9Z" fill="url(#q123)" stroke="url(#q123)" stroke-width=".6"/>
<path class="g" d="M382,586.7 363.1,599 381.1,618 398.3,606.9Z"/>
<linearGradient id="q124" gradientUnits="userSpaceOnUse" x1="446.5" y1="382.5" x2="451" y2="395.5"><stop offset="0" stop-color="#ff8e00"/><stop offset="0.5" stop-color="#ff7200"/><stop offset="1" stop-color="#ff5700"/></linearGradient>
<path d="M468,386 441.5,384.3 428.5,391.7 456.9,393.4Z" fill="url(#q124)" stroke="url(#q124)" stroke-width=".6"/>
<path class="g" d="M468,386 441.5,384.3 428.5,391.7 456.9,393.4Z"/>
<linearGradient id="q125" gradientUnits="userSpaceOnUse" x1="645.7" y1="541.7" x2="628.3" y2="524.4"><stop offset="0" stop-color="#ff4900"/><stop offset="0.5" stop-color="#ff3700"/><stop offset="1" stop-color="#ff2600"/></linearGradient>
<path d="M629.2,529 634.6,552.8 645.7,535.6 637.5,515.2Z" fill="url(#q125)" stroke="url(#q125)" stroke-width=".6"/>
<path class="g" d="M629.2,529 634.6,552.8 645.7,535.6 637.5,515.2Z"/>
<linearGradient id="q126" gradientUnits="userSpaceOnUse" x1="573.2" y1="396.6" x2="570" y2="406.5"><stop offset="0" stop-color="#ff4900"/><stop offset="0.5" stop-color="#ff3400"/><stop offset="1" stop-color="#ff2000"/></linearGradient>
<path d="M581.2,410.1 574.3,397.8 559.7,392.2 570.9,405.8Z" fill="url(#q126)" stroke="url(#q126)" stroke-width=".6"/>
<path class="g" d="M581.2,410.1 574.3,397.8 559.7,392.2 570.9,405.8Z"/>
<linearGradient id="q127" gradientUnits="userSpaceOnUse" x1="629.4" y1="442.8" x2="620.3" y2="449.5"><stop offset="0" stop-color="#ff3000"/><stop offset="0.5" stop-color="#ff2100"/><stop offset="1" stop-color="#ff1300"/></linearGradient>
<path d="M621.5,451.2 635.1,453.2 626.5,438.9 616.1,440.9Z" fill="url(#q127)" stroke="url(#q127)" stroke-width=".6"/>
<path class="g" d="M621.5,451.2 635.1,453.2 626.5,438.9 616.1,440.9Z"/>
<linearGradient id="q128" gradientUnits="userSpaceOnUse" x1="413.8" y1="620.9" x2="418.3" y2="592.3"><stop offset="0" stop-color="#e9ff00"/><stop offset="0.5" stop-color="#ffe400"/><stop offset="1" stop-color="#ffb300"/></linearGradient>
<path d="M418.8,592.3 398.3,606.9 414.1,620.9 433.2,607.5Z" fill="url(#q128)" stroke="url(#q128)" stroke-width=".6"/>
<path class="g" d="M418.8,592.3 398.3,606.9 414.1,620.9 433.2,607.5Z"/>
<linearGradient id="q129" gradientUnits="userSpaceOnUse" x1="321.5" y1="570.5" x2="342.4" y2="557.1"><stop offset="0" stop-color="#fcff00"/><stop offset="0.5" stop-color="#ffe300"/><stop offset="1" stop-color="#ffc400"/></linearGradient>
<path d="M333.9,544 317.1,554.6 330.1,583.8 346.5,573.4Z" fill="url(#q129)" stroke="url(#q129)" stroke-width=".6"/>
<path class="g" d="M333.9,544 317.1,554.6 330.1,583.8 346.5,573.4Z"/>
<linearGradient id="q130" gradientUnits="userSpaceOnUse" x1="519" y1="618.5" x2="526.8" y2="588.9"><stop offset="0" stop-color="#ffc500"/><stop offset="0.5" stop-color="#ffa400"/><stop offset="1" stop-color="#ff8300"/></linearGradient>
<path d="M523.6,591.1 502.8,614.2 523.1,616.5 541.7,592.9Z" fill="url(#q130)" stroke="url(#q130)" stroke-width=".6"/>
<path class="g" d="M523.6,591.1 502.8,614.2 523.1,616.5 541.7,592.9Z"/>
<linearGradient id="q131" gradientUnits="userSpaceOnUse" x1="636.5" y1="456" x2="624.9" y2="461.6"><stop offset="0" stop-color="#ff2b00"/><stop offset="0.5" stop-color="#ff1e00"/><stop offset="1" stop-color="#ff1100"/></linearGradient>
<path d="M625.1,462.1 640.9,468.5 635.1,453.2 621.5,451.2Z" fill="url(#q131)" stroke="url(#q131)" stroke-width=".6"/>
<path class="g" d="M625.1,462.1 640.9,468.5 635.1,453.2 621.5,451.2Z"/>
<linearGradient id="q132" gradientUnits="userSpaceOnUse" x1="560.4" y1="391.8" x2="558" y2="403"><stop offset="0" stop-color="#ff4a00"/><stop offset="0.5" stop-color="#ff3600"/><stop offset="1" stop-color="#ff2100"/></linearGradient>
<path d="M570.9,405.8 559.7,392.2 545.3,388.6 560.6,403.1Z" fill="url(#q132)" stroke="url(#q132)" stroke-width=".6"/>
<path class="g" d="M570.9,405.8 559.7,392.2 545.3,388.6 560.6,403.1Z"/>
<linearGradient id="q133" gradientUnits="userSpaceOnUse" x1="356.2" y1="430.8" x2="375" y2="442.3"><stop offset="0" stop-color="#ffba00"/><stop offset="0.5" stop-color="#ff9f00"/><stop offset="1" stop-color="#ff8400"/></linearGradient>
<path d="M380.9,422.4 356.9,429.7 349.6,450.9 374.6,443Z" fill="url(#q133)" stroke="url(#q133)" stroke-width=".6"/>
<path class="g" d="M380.9,422.4 356.9,429.7 349.6,450.9 374.6,443Z"/>
<linearGradient id="q134" gradientUnits="userSpaceOnUse" x1="632.1" y1="561.6" x2="619.2" y2="533.5"><stop offset="0" stop-color="#ff5300"/><stop offset="0.5" stop-color="#ff3f00"/><stop offset="1" stop-color="#ff2a00"/></linearGradient>
<path d="M618,540.8 619.5,567.4 634.6,552.8 629.2,529Z" fill="url(#q134)" stroke="url(#q134)" stroke-width=".6"/>
<path class="g" d="M618,540.8 619.5,567.4 634.6,552.8 629.2,529Z"/>
<linearGradient id="q135" gradientUnits="userSpaceOnUse" x1="449.1" y1="618.5" x2="453.8" y2="589.6"><stop offset="0" stop-color="#fff700"/><stop offset="0.5" stop-color="#ffcb00"/><stop offset="1" stop-color="#ff9f00"/></linearGradient>
<path d="M455.5,589.8 433.2,607.5 448,618.3 469.4,601.2Z" fill="url(#q135)" stroke="url(#q135)" stroke-width=".6"/>
<path class="g" d="M455.5,589.8 433.2,607.5 448,618.3 469.4,601.2Z"/>
<linearGradient id="q136" gradientUnits="userSpaceOnUse" x1="641.3" y1="470.3" x2="626.6" y2="473.8"><stop offset="0" stop-color="#ff2700"/><stop offset="0.5" stop-color="#ff1c00"/><stop offset="1" stop-color="#ff1000"/></linearGradient>
<path d="M626.5,473.1 643.3,484.4 640.9,468.5 625.1,462.1Z" fill="url(#q136)" stroke="url(#q136)" stroke-width=".6"/>
<path class="g" d="M626.5,473.1 643.3,484.4 640.9,468.5 625.1,462.1Z"/>
<linearGradient id="q137" gradientUnits="userSpaceOnUse" x1="501.3" y1="613.9" x2="508" y2="586.6"><stop offset="0" stop-color="#ffc600"/><stop offset="0.5" stop-color="#ffa700"/><stop offset="1" stop-color="#ff8700"/></linearGradient>
<path d="M507.3,586.4 485,609.1 502.8,614.2 523.6,591.1Z" fill="url(#q137)" stroke="url(#q137)" stroke-width=".6"/>
<path class="g" d="M507.3,586.4 485,609.1 502.8,614.2 523.6,591.1Z"/>
<linearGradient id="q138" gradientUnits="userSpaceOnUse" x1="547.9" y1="388.6" x2="546.4" y2="401.4"><stop offset="0" stop-color="#ff4a00"/><stop offset="0.5" stop-color="#ff3600"/><stop offset="1" stop-color="#ff2200"/></linearGradient>
<path d="M560.6,403.1 545.3,388.6 531.5,386.8 550.7,401.9Z" fill="url(#q138)" stroke="url(#q138)" stroke-width=".6"/>
<path class="g" d="M560.6,403.1 545.3,388.6 531.5,386.8 550.7,401.9Z"/>
<linearGradient id="q139" gradientUnits="userSpaceOnUse" x1="486.6" y1="380.4" x2="489.4" y2="395.1"><stop offset="0" stop-color="#ff6b00"/><stop offset="0.5" stop-color="#ff5300"/><stop offset="1" stop-color="#ff3a00"/></linearGradient>
<path d="M506.9,389.3 480.8,381.5 468,386 496.4,393.8Z" fill="url(#q139)" stroke="url(#q139)" stroke-width=".6"/>
<path class="g" d="M506.9,389.3 480.8,381.5 468,386 496.4,393.8Z"/>
<linearGradient id="q140" gradientUnits="userSpaceOnUse" x1="392.3" y1="404.8" x2="407" y2="420.4"><stop offset="0" stop-color="#ff9d00"/><stop offset="0.5" stop-color="#ff8200"/><stop offset="1" stop-color="#ff6800"/></linearGradient>
<path d="M417.5,403 390.8,406.2 380.9,422.4 409.1,418.4Z" fill="url(#q140)" stroke="url(#q140)" stroke-width=".6"/>
<path class="g" d="M417.5,403 390.8,406.2 380.9,422.4 409.1,418.4Z"/>
<linearGradient id="q141" gradientUnits="userSpaceOnUse" x1="613.9" y1="576.8" x2="608.4" y2="542.4"><stop offset="0" stop-color="#ff5f00"/><stop offset="0.5" stop-color="#ff4800"/><stop offset="1" stop-color="#ff3100"/></linearGradient>
<path d="M604.4,550.4 601.4,578.8 619.5,567.4 618,540.8Z" fill="url(#q141)" stroke="url(#q141)" stroke-width=".6"/>
<path class="g" d="M604.4,550.4 601.4,578.8 619.5,567.4 618,540.8Z"/>
<linearGradient id="q142" gradientUnits="userSpaceOnUse" x1="325" y1="493.9" x2="349.1" y2="495.9"><stop offset="0" stop-color="#ffd100"/><stop offset="0.5" stop-color="#ffb600"/><stop offset="1" stop-color="#ff9a00"/></linearGradient>
<path d="M346.6,475.9 325.6,486.2 327,514.2 348.4,503.5Z" fill="url(#q142)" stroke="url(#q142)" stroke-width=".6"/>
<path class="g" d="M346.6,475.9 325.6,486.2 327,514.2 348.4,503.5Z"/>
<linearGradient id="q143" gradientUnits="userSpaceOnUse" x1="643.6" y1="485.9" x2="625.6" y2="484.8"><stop offset="0" stop-color="#ff2500"/><stop offset="0.5" stop-color="#ff1b00"/><stop offset="1" stop-color="#ff1000"/></linearGradient>
<path d="M625.7,484.1 642.2,500.1 643.3,484.4 626.5,473.1Z" fill="url(#q143)" stroke="url(#q143)" stroke-width=".6"/>
<path class="g" d="M625.7,484.1 642.2,500.1 643.3,484.4 626.5,473.1Z"/>
<linearGradient id="q144" gradientUnits="userSpaceOnUse" x1="432.7" y1="389.3" x2="442.6" y2="406.9"><stop offset="0" stop-color="#ff8100"/><stop offset="0.5" stop-color="#ff6700"/><stop offset="1" stop-color="#ff4d00"/></linearGradient>
<path d="M456.9,393.4 428.5,391.7 417.5,403 447.7,404.1Z" fill="url(#q144)" stroke="url(#q144)" stroke-width=".6"/>
<path class="g" d="M456.9,393.4 428.5,391.7 417.5,403 447.7,404.1Z"/>
<linearGradient id="q145" gradientUnits="userSpaceOnUse" x1="593.9" y1="587.2" x2="594.9" y2="550.2"><stop offset="0" stop-color="#ff6d00"/><stop offset="0.5" stop-color="#ff5300"/><stop offset="1" stop-color="#ff3900"/></linearGradient>
<path d="M589.3,557.4 581.5,586.9 601.4,578.8 604.4,550.4Z" fill="url(#q145)" stroke="url(#q145)" stroke-width=".6"/>
<path class="g" d="M589.3,557.4 581.5,586.9 601.4,578.8 604.4,550.4Z"/>
<linearGradient id="q146" gradientUnits="userSpaceOnUse" x1="535.8" y1="386.9" x2="535.4" y2="402.3"><stop offset="0" stop-color="#ff4800"/><stop offset="0.5" stop-color="#ff3500"/><stop offset="1" stop-color="#ff2100"/></linearGradient>
<path d="M550.7,401.9 531.5,386.8 518.7,387 541.3,402.4Z" fill="url(#q146)" stroke="url(#q146)" stroke-width=".6"/>
<path class="g" d="M550.7,401.9 531.5,386.8 518.7,387 541.3,402.4Z"/>
<linearGradient id="q147" gradientUnits="userSpaceOnUse" x1="355.7" y1="594.4" x2="373.8" y2="565.3"><stop offset="0" stop-color="#fff000"/><stop offset="0.5" stop-color="#ffca00"/><stop offset="1" stop-color="#ffa300"/></linearGradient>
<path d="M367,561.1 346.5,573.4 363.1,599 382,586.7Z" fill="url(#q147)" stroke="url(#q147)" stroke-width=".6"/>
<path class="g" d="M367,561.1 346.5,573.4 363.1,599 382,586.7Z"/>
<linearGradient id="q148" gradientUnits="userSpaceOnUse" x1="642.9" y1="503.4" x2="621.4" y2="493.4"><stop offset="0" stop-color="#ff2700"/><stop offset="0.5" stop-color="#ff1b00"/><stop offset="1" stop-color="#ff1000"/></linearGradient>
<path d="M622.6,494.5 637.5,515.2 642.2,500.1 625.7,484.1Z" fill="url(#q148)" stroke="url(#q148)" stroke-width=".6"/>
<path class="g" d="M622.6,494.5 637.5,515.2 642.2,500.1 625.7,484.1Z"/>
<linearGradient id="q149" gradientUnits="userSpaceOnUse" x1="485.5" y1="609.2" x2="491.7" y2="578.5"><stop offset="0" stop-color="#ffc300"/><stop offset="0.5" stop-color="#ffa000"/><stop offset="1" stop-color="#ff7e00"/></linearGradient>
<path d="M492.9,578.7 469.4,601.2 485,609.1 507.3,586.4Z" fill="url(#q149)" stroke="url(#q149)" stroke-width=".6"/>
<path class="g" d="M492.9,578.7 469.4,601.2 485,609.1 507.3,586.4Z"/>
<linearGradient id="q150" gradientUnits="userSpaceOnUse" x1="574" y1="593.3" x2="579.3" y2="556"><stop offset="0" stop-color="#ff7a00"/><stop offset="0.5" stop-color="#ff5d00"/><stop offset="1" stop-color="#ff4100"/></linearGradient>
<path d="M573.6,561.7 561.3,591.5 581.5,586.9 589.3,557.4Z" fill="url(#q150)" stroke="url(#q150)" stroke-width=".6"/>
<path class="g" d="M573.6,561.7 561.3,591.5 581.5,586.9 589.3,557.4Z"/>
<linearGradient id="q151" gradientUnits="userSpaceOnUse" x1="348.2" y1="455" x2="373.5" y2="463.2"><stop offset="0" stop-color="#ffad00"/><stop offset="0.5" stop-color="#ff9400"/><stop offset="1" stop-color="#ff7c00"/></linearGradient>
<path d="M374.6,443 349.6,450.9 346.6,475.9 372.3,466.8Z" fill="url(#q151)" stroke="url(#q151)" stroke-width=".6"/>
<path class="g" d="M374.6,443 349.6,450.9 346.6,475.9 372.3,466.8Z"/>
<linearGradient id="q152" gradientUnits="userSpaceOnUse" x1="396.1" y1="606.3" x2="405.7" y2="572.3"><stop offset="0" stop-color="#ffe800"/><stop offset="0.5" stop-color="#ffbd00"/><stop offset="1" stop-color="#ff9300"/></linearGradient>
<path d="M404.5,572 382,586.7 398.3,606.9 418.8,592.3Z" fill="url(#q152)" stroke="url(#q152)" stroke-width=".6"/>
<path class="g" d="M404.5,572 382,586.7 398.3,606.9 418.8,592.3Z"/>
<linearGradient id="q153" gradientUnits="userSpaceOnUse" x1="329.1" y1="525.9" x2="353" y2="521"><stop offset="0" stop-color="#ffc700"/><stop offset="0.5" stop-color="#ffb100"/><stop offset="1" stop-color="#ff9a00"/></linearGradient>
<path d="M348.4,503.5 327,514.2 333.9,544 355.4,532.4Z" fill="url(#q153)" stroke="url(#q153)" stroke-width=".6"/>
<path class="g" d="M348.4,503.5 327,514.2 333.9,544 355.4,532.4Z"/>
<linearGradient id="q154" gradientUnits="userSpaceOnUse" x1="474.1" y1="384" x2="480.3" y2="403"><stop offset="0" stop-color="#ff6200"/><stop offset="0.5" stop-color="#ff4b00"/><stop offset="1" stop-color="#ff3400"/></linearGradient>
<path d="M496.4,393.8 468,386 456.9,393.4 487.4,400.7Z" fill="url(#q154)" stroke="url(#q154)" stroke-width=".6"/>
<path class="g" d="M496.4,393.8 468,386 456.9,393.4 487.4,400.7Z"/>
<linearGradient id="q155" gradientUnits="userSpaceOnUse" x1="637.1" y1="521.8" x2="616.9" y2="499.7"><stop offset="0" stop-color="#ff2b00"/><stop offset="0.5" stop-color="#ff1e00"/><stop offset="1" stop-color="#ff1100"/></linearGradient>
<path d="M617.3,504.1 629.2,529 637.5,515.2 622.6,494.5Z" fill="url(#q155)" stroke="url(#q155)" stroke-width=".6"/>
<path class="g" d="M617.3,504.1 629.2,529 637.5,515.2 622.6,494.5Z"/>
<linearGradient id="q156" gradientUnits="userSpaceOnUse" x1="555" y1="595.7" x2="562.7" y2="559.4"><stop offset="0" stop-color="#ff8300"/><stop offset="0.5" stop-color="#ff6600"/><stop offset="1" stop-color="#ff4900"/></linearGradient>
<path d="M558.1,563.2 541.7,592.9 561.3,591.5 573.6,561.7Z" fill="url(#q156)" stroke="url(#q156)" stroke-width=".6"/>
<path class="g" d="M558.1,563.2 541.7,592.9 561.3,591.5 573.6,561.7Z"/>
<linearGradient id="q157" gradientUnits="userSpaceOnUse" x1="524.3" y1="386.6" x2="525.6" y2="405"><stop offset="0" stop-color="#ff4600"/><stop offset="0.5" stop-color="#ff3200"/><stop offset="1" stop-color="#ff1e00"/></linearGradient>
<path d="M541.3,402.4 518.7,387 506.9,389.3 532.6,404.5Z" fill="url(#q157)" stroke="url(#q157)" stroke-width=".6"/>
<path class="g" d="M541.3,402.4 518.7,387 506.9,389.3 532.6,404.5Z"/>
<linearGradient id="q158" gradientUnits="userSpaceOnUse" x1="434.8" y1="607.8" x2="440.1" y2="574.1"><stop offset="0" stop-color="#ffd800"/><stop offset="0.5" stop-color="#ffae00"/><stop offset="1" stop-color="#ff8500"/></linearGradient>
<path d="M442.5,574.5 418.8,592.3 433.2,607.5 455.5,589.8Z" fill="url(#q158)" stroke="url(#q158)" stroke-width=".6"/>
<path class="g" d="M442.5,574.5 418.8,592.3 433.2,607.5 455.5,589.8Z"/>
<linearGradient id="q159" gradientUnits="userSpaceOnUse" x1="338.1" y1="561.4" x2="363.3" y2="543.8"><stop offset="0" stop-color="#ffd000"/><stop offset="0.5" stop-color="#ffb500"/><stop offset="1" stop-color="#ff9a00"/></linearGradient>
<path d="M355.4,532.4 333.9,544 346.5,573.4 367,561.1Z" fill="url(#q159)" stroke="url(#q159)" stroke-width=".6"/>
<path class="g" d="M355.4,532.4 333.9,544 346.5,573.4 367,561.1Z"/>
<linearGradient id="q160" gradientUnits="userSpaceOnUse" x1="380.6" y1="422.9" x2="403.7" y2="437.7"><stop offset="0" stop-color="#ff9000"/><stop offset="0.5" stop-color="#ff7700"/><stop offset="1" stop-color="#ff5f00"/></linearGradient>
<path d="M409.1,418.4 380.9,422.4 374.6,443 403.9,437.5Z" fill="url(#q160)" stroke="url(#q160)" stroke-width=".6"/>
<path class="g" d="M409.1,418.4 380.9,422.4 374.6,443 403.9,437.5Z"/>
<linearGradient id="q161" gradientUnits="userSpaceOnUse" x1="604.5" y1="425.8" x2="593.9" y2="440.8"><stop offset="0" stop-color="#ff1c00"/><stop offset="0.5" stop-color="#ff1100"/><stop offset="1" stop-color="#ff0600"/></linearGradient>
<path d="M595.2,441.7 609,431.4 600.6,423 591.1,437.1Z" fill="url(#q161)" stroke="url(#q161)" stroke-width=".6"/>
<path class="g" d="M595.2,441.7 609,431.4 600.6,423 591.1,437.1Z"/>
<linearGradient id="q162" gradientUnits="userSpaceOnUse" x1="597" y1="419" x2="588.1" y2="435.5"><stop offset="0" stop-color="#ff1f00"/><stop offset="0.5" stop-color="#ff1300"/><stop offset="1" stop-color="#ff0600"/></linearGradient>
<path d="M591.1,437.1 600.6,423 591.2,415.9 586.5,433.2Z" fill="url(#q162)" stroke="url(#q162)" stroke-width=".6"/>
<path class="g" d="M591.1,437.1 600.6,423 591.2,415.9 586.5,433.2Z"/>
<linearGradient id="q163" gradientUnits="userSpaceOnUse" x1="611.1" y1="433.4" x2="598.6" y2="446.9"><stop offset="0" stop-color="#ff1900"/><stop offset="0.5" stop-color="#ff0f00"/><stop offset="1" stop-color="#ff0500"/></linearGradient>
<path d="M598.5,446.8 616.1,440.9 609,431.4 595.2,441.7Z" fill="url(#q163)" stroke="url(#q163)" stroke-width=".6"/>
<path class="g" d="M598.5,446.8 616.1,440.9 609,431.4 595.2,441.7Z"/>
<linearGradient id="q164" gradientUnits="userSpaceOnUse" x1="625.7" y1="537.6" x2="612.5" y2="506.1"><stop offset="0" stop-color="#ff3100"/><stop offset="0.5" stop-color="#ff2200"/><stop offset="1" stop-color="#ff1300"/></linearGradient>
<path d="M610.1,512.5 618,540.8 629.2,529 617.3,504.1Z" fill="url(#q164)" stroke="url(#q164)" stroke-width=".6"/>
<path class="g" d="M610.1,512.5 618,540.8 629.2,529 617.3,504.1Z"/>
<linearGradient id="q165" gradientUnits="userSpaceOnUse" x1="588.9" y1="413.2" x2="581.7" y2="431.3"><stop offset="0" stop-color="#ff2100"/><stop offset="0.5" stop-color="#ff1400"/><stop offset="1" stop-color="#ff0700"/></linearGradient>
<path d="M586.5,433.2 591.2,415.9 581.2,410.1 581.5,430Z" fill="url(#q165)" stroke="url(#q165)" stroke-width=".6"/>
<path class="g" d="M586.5,433.2 591.2,415.9 581.2,410.1 581.5,430Z"/>
<linearGradient id="q166" gradientUnits="userSpaceOnUse" x1="616.8" y1="441.9" x2="602.1" y2="453.6"><stop offset="0" stop-color="#ff1600"/><stop offset="0.5" stop-color="#ff0d00"/><stop offset="1" stop-color="#ff0400"/></linearGradient>
<path d="M601.1,452.3 621.5,451.2 616.1,440.9 598.5,446.8Z" fill="url(#q166)" stroke="url(#q166)" stroke-width=".6"/>
<path class="g" d="M601.1,452.3 621.5,451.2 616.1,440.9 598.5,446.8Z"/>
<linearGradient id="q167" gradientUnits="userSpaceOnUse" x1="537.5" y1="594.6" x2="546" y2="560.2"><stop offset="0" stop-color="#ff8900"/><stop offset="0.5" stop-color="#ff6c00"/><stop offset="1" stop-color="#ff4f00"/></linearGradient>
<path d="M543.2,562 523.6,591.1 541.7,592.9 558.1,563.2Z" fill="url(#q167)" stroke="url(#q167)" stroke-width=".6"/>
<path class="g" d="M543.2,562 523.6,591.1 541.7,592.9 558.1,563.2Z"/>
<linearGradient id="q168" gradientUnits="userSpaceOnUse" x1="580.4" y1="408.5" x2="574.9" y2="428.2"><stop offset="0" stop-color="#ff2300"/><stop offset="0.5" stop-color="#ff1500"/><stop offset="1" stop-color="#ff0800"/></linearGradient>
<path d="M581.5,430 581.2,410.1 570.9,405.8 576.2,427.6Z" fill="url(#q168)" stroke="url(#q168)" stroke-width=".6"/>
<path class="g" d="M581.5,430 581.2,410.1 570.9,405.8 576.2,427.6Z"/>
<linearGradient id="q169" gradientUnits="userSpaceOnUse" x1="621.5" y1="451.1" x2="604" y2="460.5"><stop offset="0" stop-color="#ff1400"/><stop offset="0.5" stop-color="#ff0c00"/><stop offset="1" stop-color="#ff0400"/></linearGradient>
<path d="M602.7,458 625.1,462.1 621.5,451.2 601.1,452.3Z" fill="url(#q169)" stroke="url(#q169)" stroke-width=".6"/>
<path class="g" d="M602.7,458 625.1,462.1 621.5,451.2 601.1,452.3Z"/>
<linearGradient id="q170" gradientUnits="userSpaceOnUse" x1="471.4" y1="601.5" x2="477.4" y2="567.3"><stop offset="0" stop-color="#ffb500"/><stop offset="0.5" stop-color="#ff9300"/><stop offset="1" stop-color="#ff7000"/></linearGradient>
<path d="M480.3,567.8 455.5,589.8 469.4,601.2 492.9,578.7Z" fill="url(#q170)" stroke="url(#q170)" stroke-width=".6"/>
<path class="g" d="M480.3,567.8 455.5,589.8 469.4,601.2 492.9,578.7Z"/>
<linearGradient id="q171" gradientUnits="userSpaceOnUse" x1="420" y1="400.8" x2="437.6" y2="420.8"><stop offset="0" stop-color="#ff7400"/><stop offset="0.5" stop-color="#ff5c00"/><stop offset="1" stop-color="#ff4500"/></linearGradient>
<path d="M447.7,404.1 417.5,403 409.1,418.4 440.8,418Z" fill="url(#q171)" stroke="url(#q171)" stroke-width=".6"/>
<path class="g" d="M447.7,404.1 417.5,403 409.1,418.4 440.8,418Z"/>
<linearGradient id="q172" gradientUnits="userSpaceOnUse" x1="611.5" y1="549.4" x2="606.1" y2="513"><stop offset="0" stop-color="#ff3900"/><stop offset="0.5" stop-color="#ff2800"/><stop offset="1" stop-color="#ff1600"/></linearGradient>
<path d="M601.3,519.3 604.4,550.4 618,540.8 610.1,512.5Z" fill="url(#q172)" stroke="url(#q172)" stroke-width=".6"/>
<path class="g" d="M601.3,519.3 604.4,550.4 618,540.8 610.1,512.5Z"/>
<linearGradient id="q173" gradientUnits="userSpaceOnUse" x1="513.3" y1="388.1" x2="517.2" y2="409.7"><stop offset="0" stop-color="#ff4100"/><stop offset="0.5" stop-color="#ff2e00"/><stop offset="1" stop-color="#ff1b00"/></linearGradient>
<path d="M532.6,404.5 506.9,389.3 496.4,393.8 525,408.3Z" fill="url(#q173)" stroke="url(#q173)" stroke-width=".6"/>
<path class="g" d="M532.6,404.5 506.9,389.3 496.4,393.8 525,408.3Z"/>
<linearGradient id="q174" gradientUnits="userSpaceOnUse" x1="571.7" y1="405" x2="568.1" y2="426.2"><stop offset="0" stop-color="#ff2300"/><stop offset="0.5" stop-color="#ff1600"/><stop offset="1" stop-color="#ff0800"/></linearGradient>
<path d="M576.2,427.6 570.9,405.8 560.6,403.1 570.9,426.2Z" fill="url(#q174)" stroke="url(#q174)" stroke-width=".6"/>
<path class="g" d="M576.2,427.6 570.9,405.8 560.6,403.1 570.9,426.2Z"/>
<linearGradient id="q175" gradientUnits="userSpaceOnUse" x1="624.9" y1="461.5" x2="604.1" y2="466.8"><stop offset="0" stop-color="#ff1200"/><stop offset="0.5" stop-color="#ff0b00"/><stop offset="1" stop-color="#ff0400"/></linearGradient>
<path d="M603.2,463.7 626.5,473.1 625.1,462.1 602.7,458Z" fill="url(#q175)" stroke="url(#q175)" stroke-width=".6"/>
<path class="g" d="M603.2,463.7 626.5,473.1 625.1,462.1 602.7,458Z"/>
<linearGradient id="q176" gradientUnits="userSpaceOnUse" x1="346" y1="483.6" x2="375" y2="485.8"><stop offset="0" stop-color="#ffa300"/><stop offset="0.5" stop-color="#ff8d00"/><stop offset="1" stop-color="#ff7600"/></linearGradient>
<path d="M372.3,466.8 346.6,475.9 348.4,503.5 374.4,492.9Z" fill="url(#q176)" stroke="url(#q176)" stroke-width=".6"/>
<path class="g" d="M372.3,466.8 346.6,475.9 348.4,503.5 374.4,492.9Z"/>
<linearGradient id="q177" gradientUnits="userSpaceOnUse" x1="521.9" y1="590.8" x2="530.1" y2="558.1"><stop offset="0" stop-color="#ff8900"/><stop offset="0.5" stop-color="#ff6d00"/><stop offset="1" stop-color="#ff5200"/></linearGradient>
<path d="M529.5,558 507.3,586.4 523.6,591.1 543.2,562Z" fill="url(#q177)" stroke="url(#q177)" stroke-width=".6"/>
<path class="g" d="M529.5,558 507.3,586.4 523.6,591.1 543.2,562Z"/>
<linearGradient id="q178" gradientUnits="userSpaceOnUse" x1="462.1" y1="390.7" x2="473.9" y2="413.2"><stop offset="0" stop-color="#ff5800"/><stop offset="0.5" stop-color="#ff4300"/><stop offset="1" stop-color="#ff2e00"/></linearGradient>
<path d="M487.4,400.7 456.9,393.4 447.7,404.1 480.1,410Z" fill="url(#q178)" stroke="url(#q178)" stroke-width=".6"/>
<path class="g" d="M487.4,400.7 456.9,393.4 447.7,404.1 480.1,410Z"/>
<linearGradient id="q179" gradientUnits="userSpaceOnUse" x1="626.8" y1="473.4" x2="602.6" y2="471.5"><stop offset="0" stop-color="#ff1100"/><stop offset="0.5" stop-color="#ff0a00"/><stop offset="1" stop-color="#ff0400"/></linearGradient>
<path d="M602.8,469.3 625.7,484.1 626.5,473.1 603.2,463.7Z" fill="url(#q179)" stroke="url(#q179)" stroke-width=".6"/>
<path class="g" d="M602.8,469.3 625.7,484.1 626.5,473.1 603.2,463.7Z"/>
<linearGradient id="q180" gradientUnits="userSpaceOnUse" x1="563" y1="402.8" x2="561.3" y2="425.4"><stop offset="0" stop-color="#ff2300"/><stop offset="0.5" stop-color="#ff1600"/><stop offset="1" stop-color="#ff0800"/></linearGradient>
<path d="M570.9,426.2 560.6,403.1 550.7,401.9 565.6,425.6Z" fill="url(#q180)" stroke="url(#q180)" stroke-width=".6"/>
<path class="g" d="M570.9,426.2 560.6,403.1 550.7,401.9 565.6,425.6Z"/>
<linearGradient id="q181" gradientUnits="userSpaceOnUse" x1="596.5" y1="557.6" x2="597.3" y2="519.2"><stop offset="0" stop-color="#ff4200"/><stop offset="0.5" stop-color="#ff2e00"/><stop offset="1" stop-color="#ff1a00"/></linearGradient>
<path d="M591.4,524.4 589.3,557.4 604.4,550.4 601.3,519.3Z" fill="url(#q181)" stroke="url(#q181)" stroke-width=".6"/>
<path class="g" d="M591.4,524.4 589.3,557.4 604.4,550.4 601.3,519.3Z"/>
<linearGradient id="q182" gradientUnits="userSpaceOnUse" x1="376.5" y1="583.6" x2="395.9" y2="549.8"><stop offset="0" stop-color="#ffbf00"/><stop offset="0.5" stop-color="#ff9f00"/><stop offset="1" stop-color="#ff8000"/></linearGradient>
<path d="M391.4,547.3 367,561.1 382,586.7 404.5,572Z" fill="url(#q182)" stroke="url(#q182)" stroke-width=".6"/>
<path class="g" d="M391.4,547.3 367,561.1 382,586.7 404.5,572Z"/>
<linearGradient id="q183" gradientUnits="userSpaceOnUse" x1="626.3" y1="487.6" x2="600.5" y2="473.6"><stop offset="0" stop-color="#ff1200"/><stop offset="0.5" stop-color="#ff0b00"/><stop offset="1" stop-color="#ff0400"/></linearGradient>
<path d="M601.3,474.6 622.6,494.5 625.7,484.1 602.8,469.3Z" fill="url(#q183)" stroke="url(#q183)" stroke-width=".6"/>
<path class="g" d="M601.3,474.6 622.6,494.5 625.7,484.1 602.8,469.3Z"/>
<linearGradient id="q184" gradientUnits="userSpaceOnUse" x1="554.6" y1="401.8" x2="554.9" y2="426.1"><stop offset="0" stop-color="#ff2200"/><stop offset="0.5" stop-color="#ff1500"/><stop offset="1" stop-color="#ff0800"/></linearGradient>
<path d="M565.6,425.6 550.7,401.9 541.3,402.4 560.6,426Z" fill="url(#q184)" stroke="url(#q184)" stroke-width=".6"/>
<path class="g" d="M565.6,425.6 550.7,401.9 541.3,402.4 560.6,426Z"/>
<linearGradient id="q185" gradientUnits="userSpaceOnUse" x1="373.4" y1="446.6" x2="403.1" y2="456.6"><stop offset="0" stop-color="#ff8400"/><stop offset="0.5" stop-color="#ff6e00"/><stop offset="1" stop-color="#ff5800"/></linearGradient>
<path d="M403.9,437.5 374.6,443 372.3,466.8 402.2,459.3Z" fill="url(#q185)" stroke="url(#q185)" stroke-width=".6"/>
<path class="g" d="M403.9,437.5 374.6,443 372.3,466.8 402.2,459.3Z"/>
<linearGradient id="q186" gradientUnits="userSpaceOnUse" x1="581.5" y1="562.8" x2="586.7" y2="523.8"><stop offset="0" stop-color="#ff4900"/><stop offset="0.5" stop-color="#ff3400"/><stop offset="1" stop-color="#ff1e00"/></linearGradient>
<path d="M580.9,527.6 573.6,561.7 589.3,557.4 591.4,524.4Z" fill="url(#q186)" stroke="url(#q186)" stroke-width=".6"/>
<path class="g" d="M580.9,527.6 573.6,561.7 589.3,557.4 591.4,524.4Z"/>
<linearGradient id="q187" gradientUnits="userSpaceOnUse" x1="503" y1="391.7" x2="510.6" y2="416.2"><stop offset="0" stop-color="#ff3b00"/><stop offset="0.5" stop-color="#ff2900"/><stop offset="1" stop-color="#ff1800"/></linearGradient>
<path d="M525,408.3 496.4,393.8 487.4,400.7 518.5,413.8Z" fill="url(#q187)" stroke="url(#q187)" stroke-width=".6"/>
<path class="g" d="M525,408.3 496.4,393.8 487.4,400.7 518.5,413.8Z"/>
<linearGradient id="q188" gradientUnits="userSpaceOnUse" x1="418.7" y1="592.3" x2="429.2" y2="554.7"><stop offset="0" stop-color="#ffb400"/><stop offset="0.5" stop-color="#ff9100"/><stop offset="1" stop-color="#ff6f00"/></linearGradient>
<path d="M430.2,555 404.5,572 418.8,592.3 442.5,574.5Z" fill="url(#q188)" stroke="url(#q188)" stroke-width=".6"/>
<path class="g" d="M430.2,555 404.5,572 418.8,592.3 442.5,574.5Z"/>
<linearGradient id="q189" gradientUnits="userSpaceOnUse" x1="350.7" y1="515.4" x2="378.4" y2="509"><stop offset="0" stop-color="#ff9d00"/><stop offset="0.5" stop-color="#ff8a00"/><stop offset="1" stop-color="#ff7700"/></linearGradient>
<path d="M374.4,492.9 348.4,503.5 355.4,532.4 381,520.2Z" fill="url(#q189)" stroke="url(#q189)" stroke-width=".6"/>
<path class="g" d="M374.4,492.9 348.4,503.5 355.4,532.4 381,520.2Z"/>
<linearGradient id="q190" gradientUnits="userSpaceOnUse" x1="507.7" y1="586.5" x2="515.8" y2="550.9"><stop offset="0" stop-color="#ff8700"/><stop offset="0.5" stop-color="#ff6a00"/><stop offset="1" stop-color="#ff4c00"/></linearGradient>
<path d="M517.3,551.3 492.9,578.7 507.3,586.4 529.5,558Z" fill="url(#q190)" stroke="url(#q190)" stroke-width=".6"/>
<path class="g" d="M517.3,551.3 492.9,578.7 507.3,586.4 529.5,558Z"/>
<linearGradient id="q191" gradientUnits="userSpaceOnUse" x1="620.6" y1="501.6" x2="600.4" y2="475.3"><stop offset="0" stop-color="#ff1400"/><stop offset="0.5" stop-color="#ff0c00"/><stop offset="1" stop-color="#ff0400"/></linearGradient>
<path d="M598.8,479.5 617.3,504.1 622.6,494.5 601.3,474.6Z" fill="url(#q191)" stroke="url(#q191)" stroke-width=".6"/>
<path class="g" d="M598.8,479.5 617.3,504.1 622.6,494.5 601.3,474.6Z"/>
<linearGradient id="q192" gradientUnits="userSpaceOnUse" x1="359.4" y1="550.9" x2="387.9" y2="529.5"><stop offset="0" stop-color="#ffa600"/><stop offset="0.5" stop-color="#ff8e00"/><stop offset="1" stop-color="#ff7700"/></linearGradient>
<path d="M381,520.2 355.4,532.4 367,561.1 391.4,547.3Z" fill="url(#q192)" stroke="url(#q192)" stroke-width=".6"/>
<path class="g" d="M381,520.2 355.4,532.4 367,561.1 391.4,547.3Z"/>
<linearGradient id="q193" gradientUnits="userSpaceOnUse" x1="546.5" y1="401.9" x2="549.1" y2="428"><stop offset="0" stop-color="#ff2100"/><stop offset="0.5" stop-color="#ff1400"/><stop offset="1" stop-color="#ff0700"/></linearGradient>
<path d="M560.6,426 541.3,402.4 532.6,404.5 555.9,427.3Z" fill="url(#q193)" stroke="url(#q193)" stroke-width=".6"/>
<path class="g" d="M560.6,426 541.3,402.4 532.6,404.5 555.9,427.3Z"/>
<linearGradient id="q194" gradientUnits="userSpaceOnUse" x1="409.4" y1="418.1" x2="435.7" y2="436"><stop offset="0" stop-color="#ff6800"/><stop offset="0.5" stop-color="#ff5300"/><stop offset="1" stop-color="#ff3e00"/></linearGradient>
<path d="M440.8,418 409.1,418.4 403.9,437.5 436.6,434.8Z" fill="url(#q194)" stroke="url(#q194)" stroke-width=".6"/>
<path class="g" d="M440.8,418 409.1,418.4 403.9,437.5 436.6,434.8Z"/>
<linearGradient id="q195" gradientUnits="userSpaceOnUse" x1="458.1" y1="590.3" x2="465.2" y2="552.8"><stop offset="0" stop-color="#ffa100"/><stop offset="0.5" stop-color="#ff7f00"/><stop offset="1" stop-color="#ff5d00"/></linearGradient>
<path d="M468.9,553.5 442.5,574.5 455.5,589.8 480.3,567.8Z" fill="url(#q195)" stroke="url(#q195)" stroke-width=".6"/>
<path class="g" d="M468.9,553.5 442.5,574.5 455.5,589.8 480.3,567.8Z"/>
<linearGradient id="q196" gradientUnits="userSpaceOnUse" x1="566.9" y1="565" x2="574.9" y2="526.3"><stop offset="0" stop-color="#ff4f00"/><stop offset="0.5" stop-color="#ff3900"/><stop offset="1" stop-color="#ff2200"/></linearGradient>
<path d="M570.1,528.8 558.1,563.2 573.6,561.7 580.9,527.6Z" fill="url(#q196)" stroke="url(#q196)" stroke-width=".6"/>
<path class="g" d="M570.1,528.8 558.1,563.2 573.6,561.7 580.9,527.6Z"/>
<linearGradient id="q197" gradientUnits="userSpaceOnUse" x1="611.4" y1="512" x2="600.4" y2="479"><stop offset="0" stop-color="#ff1700"/><stop offset="0.5" stop-color="#ff0e00"/><stop offset="1" stop-color="#ff0500"/></linearGradient>
<path d="M595.5,483.7 610.1,512.5 617.3,504.1 598.8,479.5Z" fill="url(#q197)" stroke="url(#q197)" stroke-width=".6"/>
<path class="g" d="M595.5,483.7 610.1,512.5 617.3,504.1 598.8,479.5Z"/>
<linearGradient id="q198" gradientUnits="userSpaceOnUse" x1="450.9" y1="401.4" x2="470.6" y2="425.1"><stop offset="0" stop-color="#ff4e00"/><stop offset="0.5" stop-color="#ff3b00"/><stop offset="1" stop-color="#ff2800"/></linearGradient>
<path d="M480.1,410 447.7,404.1 440.8,418 474.7,421.6Z" fill="url(#q198)" stroke="url(#q198)" stroke-width=".6"/>
<path class="g" d="M480.1,410 447.7,404.1 440.8,418 474.7,421.6Z"/>
<linearGradient id="q199" gradientUnits="userSpaceOnUse" x1="601.5" y1="519.3" x2="598.3" y2="483.5"><stop offset="0" stop-color="#ff1b00"/><stop offset="0.5" stop-color="#ff1000"/><stop offset="1" stop-color="#ff0500"/></linearGradient>
<path d="M591.3,487.2 601.3,519.3 610.1,512.5 595.5,483.7Z" fill="url(#q199)" stroke="url(#q199)" stroke-width=".6"/>
<path class="g" d="M591.3,487.2 601.3,519.3 610.1,512.5 595.5,483.7Z"/>
<linearGradient id="q200" gradientUnits="userSpaceOnUse" x1="553.3" y1="564.4" x2="562.6" y2="526.9"><stop offset="0" stop-color="#ff5300"/><stop offset="0.5" stop-color="#ff3c00"/><stop offset="1" stop-color="#ff2500"/></linearGradient>
<path d="M559.6,527.9 543.2,562 558.1,563.2 570.1,528.8Z" fill="url(#q200)" stroke="url(#q200)" stroke-width=".6"/>
<path class="g" d="M559.6,527.9 543.2,562 558.1,563.2 570.1,528.8Z"/>
<linearGradient id="q201" gradientUnits="userSpaceOnUse" x1="538.8" y1="403.4" x2="544.1" y2="431"><stop offset="0" stop-color="#ff1e00"/><stop offset="0.5" stop-color="#ff1200"/><stop offset="1" stop-color="#ff0700"/></linearGradient>
<path d="M555.9,427.3 532.6,404.5 525,408.3 551.8,429.6Z" fill="url(#q201)" stroke="url(#q201)" stroke-width=".6"/>
<path class="g" d="M555.9,427.3 532.6,404.5 525,408.3 551.8,429.6Z"/>
<linearGradient id="q202" gradientUnits="userSpaceOnUse" x1="493.2" y1="397.8" x2="506.3" y2="424.3"><stop offset="0" stop-color="#ff3400"/><stop offset="0.5" stop-color="#ff2500"/><stop offset="1" stop-color="#ff1500"/></linearGradient>
<path d="M518.5,413.8 487.4,400.7 480.1,410 513.3,420.8Z" fill="url(#q202)" stroke="url(#q202)" stroke-width=".6"/>
<path class="g" d="M518.5,413.8 487.4,400.7 480.1,410 513.3,420.8Z"/>
<linearGradient id="q203" gradientUnits="userSpaceOnUse" x1="495.4" y1="579.2" x2="502.9" y2="541.2"><stop offset="0" stop-color="#ff7f00"/><stop offset="0.5" stop-color="#ff6100"/><stop offset="1" stop-color="#ff4300"/></linearGradient>
<path d="M506.5,541.9 480.3,567.8 492.9,578.7 517.3,551.3Z" fill="url(#q203)" stroke="url(#q203)" stroke-width=".6"/>
<path class="g" d="M506.5,541.9 480.3,567.8 492.9,578.7 517.3,551.3Z"/>
<linearGradient id="q204" gradientUnits="userSpaceOnUse" x1="588.6" y1="436.2" x2="579.9" y2="458.6"><stop offset="0" stop-color="#ff0700"/><stop offset="0.5" stop-color="#ff0300"/><stop offset="1" stop-color="#ff0000"/></linearGradient>
<path d="M574.5,456.5 595.2,441.7 591.1,437.1 574.5,456.5Z" fill="url(#q204)" stroke="url(#q204)" stroke-width=".6"/>
<path class="g" d="M574.5,456.5 595.2,441.7 591.1,437.1 574.5,456.5Z"/>
<linearGradient id="q205" gradientUnits="userSpaceOnUse" x1="592.7" y1="440" x2="579.6" y2="459.9"><stop offset="0" stop-color="#ff0600"/><stop offset="0.5" stop-color="#ff0300"/><stop offset="1" stop-color="#ff0000"/></linearGradient>
<path d="M574.5,456.5 598.5,446.8 595.2,441.7 574.5,456.5Z" fill="url(#q205)" stroke="url(#q205)" stroke-width=".6"/>
<path class="g" d="M574.5,456.5 598.5,446.8 595.2,441.7 574.5,456.5Z"/>
<linearGradient id="q206" gradientUnits="userSpaceOnUse" x1="371.8" y1="474.3" x2="404.8" y2="476.5"><stop offset="0" stop-color="#ff7c00"/><stop offset="0.5" stop-color="#ff6800"/><stop offset="1" stop-color="#ff5500"/></linearGradient>
<path d="M402.2,459.3 372.3,466.8 374.4,492.9 404.3,483Z" fill="url(#q206)" stroke="url(#q206)" stroke-width=".6"/>
<path class="g" d="M402.2,459.3 372.3,466.8 374.4,492.9 404.3,483Z"/>
<linearGradient id="q207" gradientUnits="userSpaceOnUse" x1="583.8" y1="432.8" x2="580.2" y2="457.3"><stop offset="0" stop-color="#ff0800"/><stop offset="0.5" stop-color="#ff0400"/><stop offset="1" stop-color="#ff0000"/></linearGradient>
<path d="M574.5,456.5 591.1,437.1 586.5,433.2 574.5,456.5Z" fill="url(#q207)" stroke="url(#q207)" stroke-width=".6"/>
<path class="g" d="M574.5,456.5 591.1,437.1 586.5,433.2 574.5,456.5Z"/>
<linearGradient id="q208" gradientUnits="userSpaceOnUse" x1="596.2" y1="444.4" x2="578.9" y2="461.1"><stop offset="0" stop-color="#ff0500"/><stop offset="0.5" stop-color="#ff0300"/><stop offset="1" stop-color="#ff0000"/></linearGradient>
<path d="M574.5,456.5 601.1,452.3 598.5,446.8 574.5,456.5Z" fill="url(#q208)" stroke="url(#q208)" stroke-width=".6"/>
<path class="g" d="M574.5,456.5 601.1,452.3 598.5,446.8 574.5,456.5Z"/>
<linearGradient id="q209" gradientUnits="userSpaceOnUse" x1="578.4" y1="430.3" x2="580.6" y2="456"><stop offset="0" stop-color="#ff0900"/><stop offset="0.5" stop-color="#ff0400"/><stop offset="1" stop-color="#ff0000"/></linearGradient>
<path d="M574.5,456.5 586.5,433.2 581.5,430 574.5,456.5Z" fill="url(#q209)" stroke="url(#q209)" stroke-width=".6"/>
<path class="g" d="M574.5,456.5 586.5,433.2 581.5,430 574.5,456.5Z"/>
<linearGradient id="q210" gradientUnits="userSpaceOnUse" x1="591.6" y1="524.4" x2="594.2" y2="487.4"><stop offset="0" stop-color="#ff1f00"/><stop offset="0.5" stop-color="#ff1300"/><stop offset="1" stop-color="#ff0600"/></linearGradient>
<path d="M586.6,489.8 591.4,524.4 601.3,519.3 591.3,487.2Z" fill="url(#q210)" stroke="url(#q210)" stroke-width=".6"/>
<path class="g" d="M586.6,489.8 591.4,524.4 601.3,519.3 591.3,487.2Z"/>
<linearGradient id="q211" gradientUnits="userSpaceOnUse" x1="599.6" y1="449.6" x2="577.3" y2="461.7"><stop offset="0" stop-color="#ff0500"/><stop offset="0.5" stop-color="#ff0200"/><stop offset="1" stop-color="#ff0000"/></linearGradient>
<path d="M574.5,456.5 602.7,458 601.1,452.3 574.5,456.5Z" fill="url(#q211)" stroke="url(#q211)" stroke-width=".6"/>
<path class="g" d="M574.5,456.5 602.7,458 601.1,452.3 574.5,456.5Z"/>
<linearGradient id="q212" gradientUnits="userSpaceOnUse" x1="572.5" y1="428.9" x2="581" y2="454.3"><stop offset="0" stop-color="#ff0900"/><stop offset="0.5" stop-color="#ff0400"/><stop offset="1" stop-color="#ff0000"/></linearGradient>
<path d="M574.5,456.5 581.5,430 576.2,427.6 574.5,456.5Z" fill="url(#q212)" stroke="url(#q212)" stroke-width=".6"/>
<path class="g" d="M574.5,456.5 581.5,430 576.2,427.6 574.5,456.5Z"/>
<linearGradient id="q213" gradientUnits="userSpaceOnUse" x1="602.6" y1="456.9" x2="574.9" y2="460.2"><stop offset="0" stop-color="#ff0400"/><stop offset="0.5" stop-color="#ff0200"/><stop offset="1" stop-color="#ff0000"/></linearGradient>
<path d="M574.5,456.5 603.2,463.7 602.7,458 574.5,456.5Z" fill="url(#q213)" stroke="url(#q213)" stroke-width=".6"/>
<path class="g" d="M574.5,456.5 603.2,463.7 602.7,458 574.5,456.5Z"/>
<linearGradient id="q214" gradientUnits="userSpaceOnUse" x1="566.7" y1="428.7" x2="581" y2="452.6"><stop offset="0" stop-color="#ff0900"/><stop offset="0.5" stop-color="#ff0400"/><stop offset="1" stop-color="#ff0000"/></linearGradient>
<path d="M574.5,456.5 576.2,427.6 570.9,426.2 574.5,456.5Z" fill="url(#q214)" stroke="url(#q214)" stroke-width=".6"/>
<path class="g" d="M574.5,456.5 576.2,427.6 570.9,426.2 574.5,456.5Z"/>
<linearGradient id="q215" gradientUnits="userSpaceOnUse" x1="603.4" y1="468.1" x2="575.2" y2="455"><stop offset="0" stop-color="#ff0400"/><stop offset="0.5" stop-color="#ff0200"/><stop offset="1" stop-color="#ff0000"/></linearGradient>
<path d="M574.5,456.5 602.8,469.3 603.2,463.7 574.5,456.5Z" fill="url(#q215)" stroke="url(#q215)" stroke-width=".6"/>
<path class="g" d="M574.5,456.5 602.8,469.3 603.2,463.7 574.5,456.5Z"/>
<linearGradient id="q216" gradientUnits="userSpaceOnUse" x1="541" y1="561.5" x2="550.3" y2="525.2"><stop offset="0" stop-color="#ff5300"/><stop offset="0.5" stop-color="#ff3d00"/><stop offset="1" stop-color="#ff2700"/></linearGradient>
<path d="M549.7,525 529.5,558 543.2,562 559.6,527.9Z" fill="url(#q216)" stroke="url(#q216)" stroke-width=".6"/>
<path class="g" d="M549.7,525 529.5,558 543.2,562 559.6,527.9Z"/>
<linearGradient id="q217" gradientUnits="userSpaceOnUse" x1="400.9" y1="570" x2="421.4" y2="533.5"><stop offset="0" stop-color="#ff9600"/><stop offset="0.5" stop-color="#ff7a00"/><stop offset="1" stop-color="#ff5e00"/></linearGradient>
<path d="M419.1,532.2 391.4,547.3 404.5,572 430.2,555Z" fill="url(#q217)" stroke="url(#q217)" stroke-width=".6"/>
<path class="g" d="M419.1,532.2 391.4,547.3 404.5,572 430.2,555Z"/>
<linearGradient id="q218" gradientUnits="userSpaceOnUse" x1="531.5" y1="406.3" x2="540.3" y2="435.1"><stop offset="0" stop-color="#ff1b00"/><stop offset="0.5" stop-color="#ff1100"/><stop offset="1" stop-color="#ff0600"/></linearGradient>
<path d="M551.8,429.6 525,408.3 518.5,413.8 548.3,432.7Z" fill="url(#q218)" stroke="url(#q218)" stroke-width=".6"/>
<path class="g" d="M551.8,429.6 525,408.3 518.5,413.8 548.3,432.7Z"/>
<linearGradient id="q219" gradientUnits="userSpaceOnUse" x1="561.4" y1="429.3" x2="580.7" y2="451"><stop offset="0" stop-color="#ff0900"/><stop offset="0.5" stop-color="#ff0400"/><stop offset="1" stop-color="#ff0000"/></linearGradient>
<path d="M574.5,456.5 570.9,426.2 565.6,425.6 574.5,456.5Z" fill="url(#q219)" stroke="url(#q219)" stroke-width=".6"/>
<path class="g" d="M574.5,456.5 570.9,426.2 565.6,425.6 574.5,456.5Z"/>
<linearGradient id="q220" gradientUnits="userSpaceOnUse" x1="596.4" y1="477.5" x2="581.6" y2="452.3"><stop offset="0" stop-color="#ff0400"/><stop offset="0.5" stop-color="#ff0200"/><stop offset="1" stop-color="#ff0000"/></linearGradient>
<path d="M574.5,456.5 601.3,474.6 602.8,469.3 574.5,456.5Z" fill="url(#q220)" stroke="url(#q220)" stroke-width=".6"/>
<path class="g" d="M574.5,456.5 601.3,474.6 602.8,469.3 574.5,456.5Z"/>
<linearGradient id="q221" gradientUnits="userSpaceOnUse" x1="582" y1="527.8" x2="588.6" y2="490.2"><stop offset="0" stop-color="#ff2300"/><stop offset="0.5" stop-color="#ff1500"/><stop offset="1" stop-color="#ff0700"/></linearGradient>
<path d="M581.4,491.4 580.9,527.6 591.4,524.4 586.6,489.8Z" fill="url(#q221)" stroke="url(#q221)" stroke-width=".6"/>
<path class="g" d="M581.4,491.4 580.9,527.6 591.4,524.4 586.6,489.8Z"/>
<linearGradient id="q222" gradientUnits="userSpaceOnUse" x1="588.7" y1="480.4" x2="586.5" y2="455.4"><stop offset="0" stop-color="#ff0500"/><stop offset="0.5" stop-color="#ff0200"/><stop offset="1" stop-color="#ff0000"/></linearGradient>
<path d="M574.5,456.5 598.8,479.5 601.3,474.6 574.5,456.5Z" fill="url(#q222)" stroke="url(#q222)" stroke-width=".6"/>
<path class="g" d="M574.5,456.5 598.8,479.5 601.3,474.6 574.5,456.5Z"/>
<linearGradient id="q223" gradientUnits="userSpaceOnUse" x1="556.8" y1="430.3" x2="579.9" y2="450.2"><stop offset="0" stop-color="#ff0900"/><stop offset="0.5" stop-color="#ff0400"/><stop offset="1" stop-color="#ff0000"/></linearGradient>
<path d="M574.5,456.5 565.6,425.6 560.6,426 574.5,456.5Z" fill="url(#q223)" stroke="url(#q223)" stroke-width=".6"/>
<path class="g" d="M574.5,456.5 565.6,425.6 560.6,426 574.5,456.5Z"/>
<linearGradient id="q224" gradientUnits="userSpaceOnUse" x1="402.8" y1="440.5" x2="436" y2="452"><stop offset="0" stop-color="#ff5f00"/><stop offset="0.5" stop-color="#ff4d00"/><stop offset="1" stop-color="#ff3a00"/></linearGradient>
<path d="M436.6,434.8 403.9,437.5 402.2,459.3 435.3,453.8Z" fill="url(#q224)" stroke="url(#q224)" stroke-width=".6"/>
<path class="g" d="M436.6,434.8 403.9,437.5 402.2,459.3 435.3,453.8Z"/>
<linearGradient id="q225" gradientUnits="userSpaceOnUse" x1="583.6" y1="481.3" x2="588" y2="459.3"><stop offset="0" stop-color="#ff0600"/><stop offset="0.5" stop-color="#ff0300"/><stop offset="1" stop-color="#ff0000"/></linearGradient>
<path d="M574.5,456.5 595.5,483.7 598.8,479.5 574.5,456.5Z" fill="url(#q225)" stroke="url(#q225)" stroke-width=".6"/>
<path class="g" d="M574.5,456.5 595.5,483.7 598.8,479.5 574.5,456.5Z"/>
<linearGradient id="q226" gradientUnits="userSpaceOnUse" x1="553.1" y1="431.2" x2="579" y2="450.5"><stop offset="0" stop-color="#ff0800"/><stop offset="0.5" stop-color="#ff0400"/><stop offset="1" stop-color="#ff0000"/></linearGradient>
<path d="M574.5,456.5 560.6,426 555.9,427.3 574.5,456.5Z" fill="url(#q226)" stroke="url(#q226)" stroke-width=".6"/>
<path class="g" d="M574.5,456.5 560.6,426 555.9,427.3 574.5,456.5Z"/>
<linearGradient id="q227" gradientUnits="userSpaceOnUse" x1="441.5" y1="417" x2="470" y2="437.4"><stop offset="0" stop-color="#ff4500"/><stop offset="0.5" stop-color="#ff3500"/><stop offset="1" stop-color="#ff2400"/></linearGradient>
<path d="M474.7,421.6 440.8,418 436.6,434.8 471.5,435.3Z" fill="url(#q227)" stroke="url(#q227)" stroke-width=".6"/>
<path class="g" d="M474.7,421.6 440.8,418 436.6,434.8 471.5,435.3Z"/>
<linearGradient id="q228" gradientUnits="userSpaceOnUse" x1="444.1" y1="574.9" x2="455.7" y2="535.2"><stop offset="0" stop-color="#ff8800"/><stop offset="0.5" stop-color="#ff6a00"/><stop offset="1" stop-color="#ff4c00"/></linearGradient>
<path d="M458.6,536 430.2,555 442.5,574.5 468.9,553.5Z" fill="url(#q228)" stroke="url(#q228)" stroke-width=".6"/>
<path class="g" d="M458.6,536 430.2,555 442.5,574.5 468.9,553.5Z"/>
<linearGradient id="q229" gradientUnits="userSpaceOnUse" x1="572.7" y1="529.4" x2="582" y2="491.6"><stop offset="0" stop-color="#ff2500"/><stop offset="0.5" stop-color="#ff1700"/><stop offset="1" stop-color="#ff0800"/></linearGradient>
<path d="M576,492 570.1,528.8 580.9,527.6 581.4,491.4Z" fill="url(#q229)" stroke="url(#q229)" stroke-width=".6"/>
<path class="g" d="M576,492 570.1,528.8 580.9,527.6 581.4,491.4Z"/>
<linearGradient id="q230" gradientUnits="userSpaceOnUse" x1="579.4" y1="482.1" x2="587.9" y2="462.3"><stop offset="0" stop-color="#ff0700"/><stop offset="0.5" stop-color="#ff0300"/><stop offset="1" stop-color="#ff0000"/></linearGradient>
<path d="M574.5,456.5 591.3,487.2 595.5,483.7 574.5,456.5Z" fill="url(#q230)" stroke="url(#q230)" stroke-width=".6"/>
<path class="g" d="M574.5,456.5 591.3,487.2 595.5,483.7 574.5,456.5Z"/>
<linearGradient id="q231" gradientUnits="userSpaceOnUse" x1="376.8" y1="505" x2="407.9" y2="496.8"><stop offset="0" stop-color="#ff7800"/><stop offset="0.5" stop-color="#ff6600"/><stop offset="1" stop-color="#ff5500"/></linearGradient>
<path d="M404.3,483 374.4,492.9 381,520.2 410.1,507.7Z" fill="url(#q231)" stroke="url(#q231)" stroke-width=".6"/>
<path class="g" d="M404.3,483 374.4,492.9 381,520.2 410.1,507.7Z"/>
<linearGradient id="q232" gradientUnits="userSpaceOnUse" x1="483.9" y1="407" x2="504.6" y2="433.2"><stop offset="0" stop-color="#ff2e00"/><stop offset="0.5" stop-color="#ff2000"/><stop offset="1" stop-color="#ff1200"/></linearGradient>
<path d="M513.3,420.8 480.1,410 474.7,421.6 509.5,429.4Z" fill="url(#q232)" stroke="url(#q232)" stroke-width=".6"/>
<path class="g" d="M513.3,420.8 480.1,410 474.7,421.6 509.5,429.4Z"/>
<linearGradient id="q233" gradientUnits="userSpaceOnUse" x1="550.2" y1="431.7" x2="577.7" y2="452.2"><stop offset="0" stop-color="#ff0800"/><stop offset="0.5" stop-color="#ff0400"/><stop offset="1" stop-color="#ff0000"/></linearGradient>
<path d="M574.5,456.5 555.9,427.3 551.8,429.6 574.5,456.5Z" fill="url(#q233)" stroke="url(#q233)" stroke-width=".6"/>
<path class="g" d="M574.5,456.5 555.9,427.3 551.8,429.6 574.5,456.5Z"/>
<linearGradient id="q234" gradientUnits="userSpaceOnUse" x1="529.7" y1="558" x2="538.9" y2="519.7"><stop offset="0" stop-color="#ff5200"/><stop offset="0.5" stop-color="#ff3b00"/><stop offset="1" stop-color="#ff2400"/></linearGradient>
<path d="M540.5,520.1 517.3,551.3 529.5,558 549.7,525Z" fill="url(#q234)" stroke="url(#q234)" stroke-width=".6"/>
<path class="g" d="M540.5,520.1 517.3,551.3 529.5,558 549.7,525Z"/>
<linearGradient id="q235" gradientUnits="userSpaceOnUse" x1="524.5" y1="411" x2="538.1" y2="440"><stop offset="0" stop-color="#ff1800"/><stop offset="0.5" stop-color="#ff0f00"/><stop offset="1" stop-color="#ff0500"/></linearGradient>
<path d="M548.3,432.7 518.5,413.8 513.3,420.8 545.4,436.6Z" fill="url(#q235)" stroke="url(#q235)" stroke-width=".6"/>
<path class="g" d="M548.3,432.7 518.5,413.8 513.3,420.8 545.4,436.6Z"/>
<linearGradient id="q236" gradientUnits="userSpaceOnUse" x1="575.5" y1="482.8" x2="587.1" y2="464.4"><stop offset="0" stop-color="#ff0800"/><stop offset="0.5" stop-color="#ff0400"/><stop offset="1" stop-color="#ff0000"/></linearGradient>
<path d="M574.5,456.5 586.6,489.8 591.3,487.2 574.5,456.5Z" fill="url(#q236)" stroke="url(#q236)" stroke-width=".6"/>
<path class="g" d="M574.5,456.5 586.6,489.8 591.3,487.2 574.5,456.5Z"/>
<linearGradient id="q237" gradientUnits="userSpaceOnUse" x1="384.9" y1="539.1" x2="415.6" y2="514.5"><stop offset="0" stop-color="#ff8100"/><stop offset="0.5" stop-color="#ff6b00"/><stop offset="1" stop-color="#ff5600"/></linearGradient>
<path d="M410.1,507.7 381,520.2 391.4,547.3 419.1,532.2Z" fill="url(#q237)" stroke="url(#q237)" stroke-width=".6"/>
<path class="g" d="M410.1,507.7 381,520.2 391.4,547.3 419.1,532.2Z"/>
<linearGradient id="q238" gradientUnits="userSpaceOnUse" x1="548.7" y1="432.1" x2="575.9" y2="454.8"><stop offset="0" stop-color="#ff0700"/><stop offset="0.5" stop-color="#ff0300"/><stop offset="1" stop-color="#ff0000"/></linearGradient>
<path d="M574.5,456.5 551.8,429.6 548.3,432.7 574.5,456.5Z" fill="url(#q238)" stroke="url(#q238)" stroke-width=".6"/>
<path class="g" d="M574.5,456.5 551.8,429.6 548.3,432.7 574.5,456.5Z"/>
<linearGradient id="q239" gradientUnits="userSpaceOnUse" x1="483.8" y1="568.5" x2="492.2" y2="528.9"><stop offset="0" stop-color="#ff7000"/><stop offset="0.5" stop-color="#ff5400"/><stop offset="1" stop-color="#ff3800"/></linearGradient>
<path d="M497,529.9 468.9,553.5 480.3,567.8 506.5,541.9Z" fill="url(#q239)" stroke="url(#q239)" stroke-width=".6"/>
<path class="g" d="M497,529.9 468.9,553.5 480.3,567.8 506.5,541.9Z"/>
<linearGradient id="q240" gradientUnits="userSpaceOnUse" x1="571.5" y1="483.3" x2="585.8" y2="465.8"><stop offset="0" stop-color="#ff0900"/><stop offset="0.5" stop-color="#ff0400"/><stop offset="1" stop-color="#ff0000"/></linearGradient>
<path d="M574.5,456.5 581.4,491.4 586.6,489.8 574.5,456.5Z" fill="url(#q240)" stroke="url(#q240)" stroke-width=".6"/>
<path class="g" d="M574.5,456.5 581.4,491.4 586.6,489.8 574.5,456.5Z"/>
<linearGradient id="q241" gradientUnits="userSpaceOnUse" x1="564" y1="529.1" x2="574.6" y2="491.6"><stop offset="0" stop-color="#ff2700"/><stop offset="0.5" stop-color="#ff1800"/><stop offset="1" stop-color="#ff0900"/></linearGradient>
<path d="M570.6,491.6 559.6,527.9 570.1,528.8 576,492Z" fill="url(#q241)" stroke="url(#q241)" stroke-width=".6"/>
<path class="g" d="M570.6,491.6 559.6,527.9 570.1,528.8 576,492Z"/>
<linearGradient id="q242" gradientUnits="userSpaceOnUse" x1="547.6" y1="433.4" x2="573.9" y2="457.2"><stop offset="0" stop-color="#ff0600"/><stop offset="0.5" stop-color="#ff0300"/><stop offset="1" stop-color="#ff0000"/></linearGradient>
<path d="M574.5,456.5 548.3,432.7 545.4,436.6 574.5,456.5Z" fill="url(#q242)" stroke="url(#q242)" stroke-width=".6"/>
<path class="g" d="M574.5,456.5 548.3,432.7 545.4,436.6 574.5,456.5Z"/>
<linearGradient id="q243" gradientUnits="userSpaceOnUse" x1="567.5" y1="483.6" x2="584.5" y2="466.4"><stop offset="0" stop-color="#ff0a00"/><stop offset="0.5" stop-color="#ff0500"/><stop offset="1" stop-color="#ff0000"/></linearGradient>
<path d="M574.5,456.5 576,492 581.4,491.4 574.5,456.5Z" fill="url(#q243)" stroke="url(#q243)" stroke-width=".6"/>
<path class="g" d="M574.5,456.5 576,492 581.4,491.4 574.5,456.5Z"/>
<linearGradient id="q244" gradientUnits="userSpaceOnUse" x1="545.6" y1="436.3" x2="573.1" y2="458.3"><stop offset="0" stop-color="#ff0500"/><stop offset="0.5" stop-color="#ff0200"/><stop offset="1" stop-color="#ff0000"/></linearGradient>
<path d="M574.5,456.5 545.4,436.6 543.4,441.2 574.5,456.5Z" fill="url(#q244)" stroke="url(#q244)" stroke-width=".6"/>
<path class="g" d="M574.5,456.5 545.4,436.6 543.4,441.2 574.5,456.5Z"/>
<linearGradient id="q245" gradientUnits="userSpaceOnUse" x1="563.5" y1="483.8" x2="583.1" y2="465.9"><stop offset="0" stop-color="#ff0a00"/><stop offset="0.5" stop-color="#ff0500"/><stop offset="1" stop-color="#ff0000"/></linearGradient>
<path d="M574.5,456.5 570.6,491.6 576,492 574.5,456.5Z" fill="url(#q245)" stroke="url(#q245)" stroke-width=".6"/>
<path class="g" d="M574.5,456.5 570.6,491.6 576,492 574.5,456.5Z"/>
<linearGradient id="q246" gradientUnits="userSpaceOnUse" x1="517.5" y1="417.7" x2="537.9" y2="445.2"><stop offset="0" stop-color="#ff1500"/><stop offset="0.5" stop-color="#ff0d00"/><stop offset="1" stop-color="#ff0400"/></linearGradient>
<path d="M545.4,436.6 513.3,420.8 509.5,429.4 543.4,441.2Z" fill="url(#q246)" stroke="url(#q246)" stroke-width=".6"/>
<path class="g" d="M545.4,436.6 513.3,420.8 509.5,429.4 543.4,441.2Z"/>
<linearGradient id="q247" gradientUnits="userSpaceOnUse" x1="556.2" y1="527.2" x2="566.8" y2="490.5"><stop offset="0" stop-color="#ff2700"/><stop offset="0.5" stop-color="#ff1800"/><stop offset="1" stop-color="#ff0a00"/></linearGradient>
<path d="M565.3,490.1 549.7,525 559.6,527.9 570.6,491.6Z" fill="url(#q247)" stroke="url(#q247)" stroke-width=".6"/>
<path class="g" d="M565.3,490.1 549.7,525 559.6,527.9 570.6,491.6Z"/>
<linearGradient id="q248" gradientUnits="userSpaceOnUse" x1="560.1" y1="484.6" x2="581.6" y2="463.9"><stop offset="0" stop-color="#ff0a00"/><stop offset="0.5" stop-color="#ff0500"/><stop offset="1" stop-color="#ff0000"/></linearGradient>
<path d="M574.5,456.5 565.3,490.1 570.6,491.6 574.5,456.5Z" fill="url(#q248)" stroke="url(#q248)" stroke-width=".6"/>
<path class="g" d="M574.5,456.5 565.3,490.1 570.6,491.6 574.5,456.5Z"/>
<linearGradient id="q249" gradientUnits="userSpaceOnUse" x1="543" y1="441.8" x2="573.8" y2="457.8"><stop offset="0" stop-color="#ff0400"/><stop offset="0.5" stop-color="#ff0200"/><stop offset="1" stop-color="#ff0000"/></linearGradient>
<path d="M574.5,456.5 543.4,441.2 542.1,446.3 574.5,456.5Z" fill="url(#q249)" stroke="url(#q249)" stroke-width=".6"/>
<path class="g" d="M574.5,456.5 543.4,441.2 542.1,446.3 574.5,456.5Z"/>
<linearGradient id="q250" gradientUnits="userSpaceOnUse" x1="401.8" y1="466.5" x2="437.6" y2="468.4"><stop offset="0" stop-color="#ff5800"/><stop offset="0.5" stop-color="#ff4800"/><stop offset="1" stop-color="#ff3800"/></linearGradient>
<path d="M435.3,453.8 402.2,459.3 404.3,483 437.2,474.2Z" fill="url(#q250)" stroke="url(#q250)" stroke-width=".6"/>
<path class="g" d="M435.3,453.8 402.2,459.3 404.3,483 437.2,474.2Z"/>
<linearGradient id="q251" gradientUnits="userSpaceOnUse" x1="519.8" y1="551.8" x2="528.5" y2="512.4"><stop offset="0" stop-color="#ff4c00"/><stop offset="0.5" stop-color="#ff3600"/><stop offset="1" stop-color="#ff1f00"/></linearGradient>
<path d="M532.4,513.3 506.5,541.9 517.3,551.3 540.5,520.1Z" fill="url(#q251)" stroke="url(#q251)" stroke-width=".6"/>
<path class="g" d="M532.4,513.3 506.5,541.9 517.3,551.3 540.5,520.1Z"/>
<linearGradient id="q252" gradientUnits="userSpaceOnUse" x1="558.6" y1="486.2" x2="578.7" y2="459.7"><stop offset="0" stop-color="#ff0900"/><stop offset="0.5" stop-color="#ff0400"/><stop offset="1" stop-color="#ff0000"/></linearGradient>
<path d="M574.5,456.5 560.4,487.5 565.3,490.1 574.5,456.5Z" fill="url(#q252)" stroke="url(#q252)" stroke-width=".6"/>
<path class="g" d="M574.5,456.5 560.4,487.5 565.3,490.1 574.5,456.5Z"/>
<path d="M574.5,456.5 542.1,446.3 541.7,451.9 574.5,456.5Z" fill="#ff0200" stroke="#ff0200" stroke-width=".6"/>
<path class="g" d="M574.5,456.5 542.1,446.3 541.7,451.9 574.5,456.5Z"/>
<linearGradient id="q254" gradientUnits="userSpaceOnUse" x1="475.9" y1="420.1" x2="505.1" y2="442"><stop offset="0" stop-color="#ff2800"/><stop offset="0.5" stop-color="#ff1c00"/><stop offset="1" stop-color="#ff1000"/></linearGradient>
<path d="M509.5,429.4 474.7,421.6 471.5,435.3 507.2,439.2Z" fill="url(#q254)" stroke="url(#q254)" stroke-width=".6"/>
<path class="g" d="M509.5,429.4 474.7,421.6 471.5,435.3 507.2,439.2Z"/>
<linearGradient id="q255" gradientUnits="userSpaceOnUse" x1="560.3" y1="487.5" x2="572.5" y2="455.7"><stop offset="0" stop-color="#ff0900"/><stop offset="0.5" stop-color="#ff0400"/><stop offset="1" stop-color="#ff0000"/></linearGradient>
<path d="M574.5,456.5 555.9,484 560.4,487.5 574.5,456.5Z" fill="url(#q255)" stroke="url(#q255)" stroke-width=".6"/>
<path class="g" d="M574.5,456.5 555.9,484 560.4,487.5 574.5,456.5Z"/>
<path d="M574.5,456.5 541.7,451.9 542.2,457.6 574.5,456.5Z" fill="#ff0200" stroke="#ff0200" stroke-width=".6"/>
<path class="g" d="M574.5,456.5 541.7,451.9 542.2,457.6 574.5,456.5Z"/>
<linearGradient id="q257" gradientUnits="userSpaceOnUse" x1="435.7" y1="437.3" x2="470.9" y2="449.6"><stop offset="0" stop-color="#ff3f00"/><stop offset="0.5" stop-color="#ff3000"/><stop offset="1" stop-color="#ff2100"/></linearGradient>
<path d="M471.5,435.3 436.6,434.8 435.3,453.8 470.6,450.6Z" fill="url(#q257)" stroke="url(#q257)" stroke-width=".6"/>
<path class="g" d="M471.5,435.3 436.6,434.8 435.3,453.8 470.6,450.6Z"/>
<linearGradient id="q258" gradientUnits="userSpaceOnUse" x1="561.9" y1="485" x2="566.6" y2="455.2"><stop offset="0" stop-color="#ff0800"/><stop offset="0.5" stop-color="#ff0400"/><stop offset="1" stop-color="#ff0000"/></linearGradient>
<path d="M574.5,456.5 551.9,479.7 555.9,484 574.5,456.5Z" fill="url(#q258)" stroke="url(#q258)" stroke-width=".6"/>
<path class="g" d="M574.5,456.5 551.9,479.7 555.9,484 574.5,456.5Z"/>
<linearGradient id="q259" gradientUnits="userSpaceOnUse" x1="545.9" y1="467" x2="570.6" y2="450.6"><stop offset="0" stop-color="#ff0400"/><stop offset="0.5" stop-color="#ff0200"/><stop offset="1" stop-color="#ff0000"/></linearGradient>
<path d="M574.5,456.5 542.2,457.6 543.6,463.5 574.5,456.5Z" fill="url(#q259)" stroke="url(#q259)" stroke-width=".6"/>
<path class="g" d="M574.5,456.5 542.2,457.6 543.6,463.5 574.5,456.5Z"/>
<linearGradient id="q260" gradientUnits="userSpaceOnUse" x1="560.4" y1="481" x2="564.3" y2="455"><stop offset="0" stop-color="#ff0700"/><stop offset="0.5" stop-color="#ff0300"/><stop offset="1" stop-color="#ff0000"/></linearGradient>
<path d="M574.5,456.5 548.5,474.7 551.9,479.7 574.5,456.5Z" fill="url(#q260)" stroke="url(#q260)" stroke-width=".6"/>
<path class="g" d="M574.5,456.5 548.5,474.7 551.9,479.7 574.5,456.5Z"/>
<linearGradient id="q261" gradientUnits="userSpaceOnUse" x1="549.2" y1="524.9" x2="559" y2="487.2"><stop offset="0" stop-color="#ff2600"/><stop offset="0.5" stop-color="#ff1800"/><stop offset="1" stop-color="#ff0900"/></linearGradient>
<path d="M560.4,487.5 540.5,520.1 549.7,525 565.3,490.1Z" fill="url(#q261)" stroke="url(#q261)" stroke-width=".6"/>
<path class="g" d="M560.4,487.5 540.5,520.1 549.7,525 565.3,490.1Z"/>
<linearGradient id="q262" gradientUnits="userSpaceOnUse" x1="551.6" y1="473.2" x2="566.6" y2="451.1"><stop offset="0" stop-color="#ff0400"/><stop offset="0.5" stop-color="#ff0200"/><stop offset="1" stop-color="#ff0000"/></linearGradient>
<path d="M574.5,456.5 543.6,463.5 545.7,469.2 574.5,456.5Z" fill="url(#q262)" stroke="url(#q262)" stroke-width=".6"/>
<path class="g" d="M574.5,456.5 543.6,463.5 545.7,469.2 574.5,456.5Z"/>
<linearGradient id="q263" gradientUnits="userSpaceOnUse" x1="556.8" y1="477.3" x2="564.3" y2="453.3"><stop offset="0" stop-color="#ff0500"/><stop offset="0.5" stop-color="#ff0300"/><stop offset="1" stop-color="#ff0000"/></linearGradient>
<path d="M574.5,456.5 545.7,469.2 548.5,474.7 574.5,456.5Z" fill="url(#q263)" stroke="url(#q263)" stroke-width=".6"/>
<path class="g" d="M574.5,456.5 545.7,469.2 548.5,474.7 574.5,456.5Z"/>
<linearGradient id="q264" gradientUnits="userSpaceOnUse" x1="428.6" y1="554.1" x2="449.6" y2="516.3"><stop offset="0" stop-color="#ff7000"/><stop offset="0.5" stop-color="#ff5700"/><stop offset="1" stop-color="#ff3f00"/></linearGradient>
<path d="M449.5,516.2 419.1,532.2 430.2,555 458.6,536Z" fill="url(#q264)" stroke="url(#q264)" stroke-width=".6"/>
<path class="g" d="M449.5,516.2 419.1,532.2 430.2,555 458.6,536Z"/>
<linearGradient id="q265" gradientUnits="userSpaceOnUse" x1="511" y1="427.4" x2="539.5" y2="449.7"><stop offset="0" stop-color="#ff1200"/><stop offset="0.5" stop-color="#ff0b00"/><stop offset="1" stop-color="#ff0400"/></linearGradient>
<path d="M543.4,441.2 509.5,429.4 507.2,439.2 542.1,446.3Z" fill="url(#q265)" stroke="url(#q265)" stroke-width=".6"/>
<path class="g" d="M543.4,441.2 509.5,429.4 507.2,439.2 542.1,446.3Z"/>
<linearGradient id="q266" gradientUnits="userSpaceOnUse" x1="471.9" y1="554.4" x2="484.3" y2="514.3"><stop offset="0" stop-color="#ff5d00"/><stop offset="0.5" stop-color="#ff4500"/><stop offset="1" stop-color="#ff2d00"/></linearGradient>
<path d="M488.7,515.7 458.6,536 468.9,553.5 497,529.9Z" fill="url(#q266)" stroke="url(#q266)" stroke-width=".6"/>
<path class="g" d="M488.7,515.7 458.6,536 468.9,553.5 497,529.9Z"/>
<linearGradient id="q267" gradientUnits="userSpaceOnUse" x1="543" y1="520.7" x2="551.6" y2="483"><stop offset="0" stop-color="#ff2400"/><stop offset="0.5" stop-color="#ff1600"/><stop offset="1" stop-color="#ff0800"/></linearGradient>
<path d="M555.9,484 532.4,513.3 540.5,520.1 560.4,487.5Z" fill="url(#q267)" stroke="url(#q267)" stroke-width=".6"/>
<path class="g" d="M555.9,484 532.4,513.3 540.5,520.1 560.4,487.5Z"/>
<linearGradient id="q268" gradientUnits="userSpaceOnUse" x1="406.4" y1="495" x2="440.4" y2="484.9"><stop offset="0" stop-color="#ff5600"/><stop offset="0.5" stop-color="#ff4700"/><stop offset="1" stop-color="#ff3800"/></linearGradient>
<path d="M437.2,474.2 404.3,483 410.1,507.7 442.1,495.3Z" fill="url(#q268)" stroke="url(#q268)" stroke-width=".6"/>
<path class="g" d="M437.2,474.2 404.3,483 410.1,507.7 442.1,495.3Z"/>
<linearGradient id="q269" gradientUnits="userSpaceOnUse" x1="510.6" y1="542.8" x2="519.8" y2="503.5"><stop offset="0" stop-color="#ff4300"/><stop offset="0.5" stop-color="#ff2f00"/><stop offset="1" stop-color="#ff1a00"/></linearGradient>
<path d="M525.4,504.8 497,529.9 506.5,541.9 532.4,513.3Z" fill="url(#q269)" stroke="url(#q269)" stroke-width=".6"/>
<path class="g" d="M525.4,504.8 497,529.9 506.5,541.9 532.4,513.3Z"/>
<linearGradient id="q270" gradientUnits="userSpaceOnUse" x1="506.8" y1="440.3" x2="541.4" y2="452.8"><stop offset="0" stop-color="#ff1000"/><stop offset="0.5" stop-color="#ff0a00"/><stop offset="1" stop-color="#ff0400"/></linearGradient>
<path d="M542.1,446.3 507.2,439.2 506.6,449.9 541.7,451.9Z" fill="url(#q270)" stroke="url(#q270)" stroke-width=".6"/>
<path class="g" d="M542.1,446.3 507.2,439.2 506.6,449.9 541.7,451.9Z"/>
<linearGradient id="q271" gradientUnits="userSpaceOnUse" x1="414.1" y1="526.3" x2="445.7" y2="499.5"><stop offset="0" stop-color="#ff5e00"/><stop offset="0.5" stop-color="#ff4c00"/><stop offset="1" stop-color="#ff3900"/></linearGradient>
<path d="M442.1,495.3 410.1,507.7 419.1,532.2 449.5,516.2Z" fill="url(#q271)" stroke="url(#q271)" stroke-width=".6"/>
<path class="g" d="M442.1,495.3 410.1,507.7 419.1,532.2 449.5,516.2Z"/>
<linearGradient id="q272" gradientUnits="userSpaceOnUse" x1="470.9" y1="437.1" x2="506.6" y2="449.9"><stop offset="0" stop-color="#ff2400"/><stop offset="0.5" stop-color="#ff1a00"/><stop offset="1" stop-color="#ff0f00"/></linearGradient>
<path d="M507.2,439.2 471.5,435.3 470.6,450.6 506.6,449.9Z" fill="url(#q272)" stroke="url(#q272)" stroke-width=".6"/>
<path class="g" d="M507.2,439.2 471.5,435.3 470.6,450.6 506.6,449.9Z"/>
<linearGradient id="q273" gradientUnits="userSpaceOnUse" x1="537.1" y1="514.4" x2="545.5" y2="478.2"><stop offset="0" stop-color="#ff2000"/><stop offset="0.5" stop-color="#ff1300"/><stop offset="1" stop-color="#ff0600"/></linearGradient>
<path d="M551.9,479.7 525.4,504.8 532.4,513.3 555.9,484Z" fill="url(#q273)" stroke="url(#q273)" stroke-width=".6"/>
<path class="g" d="M551.9,479.7 525.4,504.8 532.4,513.3 555.9,484Z"/>
<linearGradient id="q274" gradientUnits="userSpaceOnUse" x1="435.1" y1="460.5" x2="472.3" y2="461.9"><stop offset="0" stop-color="#ff3a00"/><stop offset="0.5" stop-color="#ff2d00"/><stop offset="1" stop-color="#ff2000"/></linearGradient>
<path d="M470.6,450.6 435.3,453.8 437.2,474.2 472.1,466.8Z" fill="url(#q274)" stroke="url(#q274)" stroke-width=".6"/>
<path class="g" d="M470.6,450.6 435.3,453.8 437.2,474.2 472.1,466.8Z"/>
<linearGradient id="q275" gradientUnits="userSpaceOnUse" x1="506.6" y1="454.9" x2="542.2" y2="455.1"><stop offset="0" stop-color="#ff0f00"/><stop offset="0.5" stop-color="#ff0900"/><stop offset="1" stop-color="#ff0400"/></linearGradient>
<path d="M541.7,451.9 506.6,449.9 507.6,461.1 542.2,457.6Z" fill="url(#q275)" stroke="url(#q275)" stroke-width=".6"/>
<path class="g" d="M541.7,451.9 506.6,449.9 507.6,461.1 542.2,457.6Z"/>
<linearGradient id="q276" gradientUnits="userSpaceOnUse" x1="530.5" y1="506.4" x2="541.5" y2="472.4"><stop offset="0" stop-color="#ff1a00"/><stop offset="0.5" stop-color="#ff1000"/><stop offset="1" stop-color="#ff0500"/></linearGradient>
<path d="M548.5,474.7 519.3,494.8 525.4,504.8 551.9,479.7Z" fill="url(#q276)" stroke="url(#q276)" stroke-width=".6"/>
<path class="g" d="M548.5,474.7 519.3,494.8 525.4,504.8 551.9,479.7Z"/>
<linearGradient id="q277" gradientUnits="userSpaceOnUse" x1="501" y1="531.2" x2="513.6" y2="493"><stop offset="0" stop-color="#ff3800"/><stop offset="0.5" stop-color="#ff2700"/><stop offset="1" stop-color="#ff1500"/></linearGradient>
<path d="M519.3,494.8 488.7,515.7 497,529.9 525.4,504.8Z" fill="url(#q277)" stroke="url(#q277)" stroke-width=".6"/>
<path class="g" d="M519.3,494.8 488.7,515.7 497,529.9 525.4,504.8Z"/>
<linearGradient id="q278" gradientUnits="userSpaceOnUse" x1="458.8" y1="536.1" x2="479.7" y2="498.9"><stop offset="0" stop-color="#ff4c00"/><stop offset="0.5" stop-color="#ff3900"/><stop offset="1" stop-color="#ff2500"/></linearGradient>
<path d="M481.6,499.9 449.5,516.2 458.6,536 488.7,515.7Z" fill="url(#q278)" stroke="url(#q278)" stroke-width=".6"/>
<path class="g" d="M481.6,499.9 449.5,516.2 458.6,536 488.7,515.7Z"/>
<linearGradient id="q279" gradientUnits="userSpaceOnUse" x1="509.2" y1="470.2" x2="542.1" y2="457.3"><stop offset="0" stop-color="#ff0f00"/><stop offset="0.5" stop-color="#ff0900"/><stop offset="1" stop-color="#ff0400"/></linearGradient>
<path d="M542.2,457.6 507.6,461.1 510.2,472.6 543.6,463.5Z" fill="url(#q279)" stroke="url(#q279)" stroke-width=".6"/>
<path class="g" d="M542.2,457.6 507.6,461.1 510.2,472.6 543.6,463.5Z"/>
<linearGradient id="q280" gradientUnits="userSpaceOnUse" x1="470.5" y1="456.6" x2="507.7" y2="457.4"><stop offset="0" stop-color="#ff2200"/><stop offset="0.5" stop-color="#ff1800"/><stop offset="1" stop-color="#ff0f00"/></linearGradient>
<path d="M506.6,449.9 470.6,450.6 472.1,466.8 507.6,461.1Z" fill="url(#q280)" stroke="url(#q280)" stroke-width=".6"/>
<path class="g" d="M506.6,449.9 470.6,450.6 472.1,466.8 507.6,461.1Z"/>
<linearGradient id="q281" gradientUnits="userSpaceOnUse" x1="523" y1="496.9" x2="539.9" y2="466.1"><stop offset="0" stop-color="#ff1500"/><stop offset="0.5" stop-color="#ff0d00"/><stop offset="1" stop-color="#ff0400"/></linearGradient>
<path d="M545.7,469.2 514.2,484 519.3,494.8 548.5,474.7Z" fill="url(#q281)" stroke="url(#q281)" stroke-width=".6"/>
<path class="g" d="M545.7,469.2 514.2,484 519.3,494.8 548.5,474.7Z"/>
<linearGradient id="q282" gradientUnits="userSpaceOnUse" x1="515.1" y1="485" x2="540.8" y2="460.5"><stop offset="0" stop-color="#ff1100"/><stop offset="0.5" stop-color="#ff0b00"/><stop offset="1" stop-color="#ff0400"/></linearGradient>
<path d="M543.6,463.5 510.2,472.6 514.2,484 545.7,469.2Z" fill="url(#q282)" stroke="url(#q282)" stroke-width=".6"/>
<path class="g" d="M543.6,463.5 510.2,472.6 514.2,484 545.7,469.2Z"/>
<linearGradient id="q283" gradientUnits="userSpaceOnUse" x1="439" y1="485.6" x2="474.5" y2="474"><stop offset="0" stop-color="#ff3a00"/><stop offset="0.5" stop-color="#ff2d00"/><stop offset="1" stop-color="#ff2100"/></linearGradient>
<path d="M472.1,466.8 437.2,474.2 442.1,495.3 475.9,483.4Z" fill="url(#q283)" stroke="url(#q283)" stroke-width=".6"/>
<path class="g" d="M472.1,466.8 437.2,474.2 442.1,495.3 475.9,483.4Z"/>
<linearGradient id="q284" gradientUnits="userSpaceOnUse" x1="446.3" y1="512.6" x2="477.5" y2="485.2"><stop offset="0" stop-color="#ff4000"/><stop offset="0.5" stop-color="#ff3100"/><stop offset="1" stop-color="#ff2100"/></linearGradient>
<path d="M475.9,483.4 442.1,495.3 449.5,516.2 481.6,499.9Z" fill="url(#q284)" stroke="url(#q284)" stroke-width=".6"/>
<path class="g" d="M475.9,483.4 442.1,495.3 449.5,516.2 481.6,499.9Z"/>
<linearGradient id="q285" gradientUnits="userSpaceOnUse" x1="490.6" y1="516.7" x2="510.4" y2="481.9"><stop offset="0" stop-color="#ff2e00"/><stop offset="0.5" stop-color="#ff1f00"/><stop offset="1" stop-color="#ff1100"/></linearGradient>
<path d="M514.2,484 481.6,499.9 488.7,515.7 519.3,494.8Z" fill="url(#q285)" stroke="url(#q285)" stroke-width=".6"/>
<path class="g" d="M514.2,484 481.6,499.9 488.7,515.7 519.3,494.8Z"/>
<linearGradient id="q286" gradientUnits="userSpaceOnUse" x1="473.7" y1="477.2" x2="508.9" y2="464.7"><stop offset="0" stop-color="#ff2200"/><stop offset="0.5" stop-color="#ff1800"/><stop offset="1" stop-color="#ff0f00"/></linearGradient>
<path d="M507.6,461.1 472.1,466.8 475.9,483.4 510.2,472.6Z" fill="url(#q286)" stroke="url(#q286)" stroke-width=".6"/>
<path class="g" d="M507.6,461.1 472.1,466.8 475.9,483.4 510.2,472.6Z"/>
<linearGradient id="q287" gradientUnits="userSpaceOnUse" x1="480.3" y1="498.5" x2="509.7" y2="472.1"><stop offset="0" stop-color="#ff2600"/><stop offset="0.5" stop-color="#ff1a00"/><stop offset="1" stop-color="#ff0f00"/></linearGradient>
<path d="M510.2,472.6 475.9,483.4 481.6,499.9 514.2,484Z" fill="url(#q287)" stroke="url(#q287)" stroke-width=".6"/>
<path class="g" d="M510.2,472.6 475.9,483.4 481.6,499.9 514.2,484Z"/>
<path d="M574.5 450L580 456.8 574.5 463.5 569 456.8Z" fill="#fff"/>
</g></svg>
<div class="t" style="left:380px;top:153px;color:#ffffa0;font-weight:bold;letter-spacing:1.1px">(90,90)</div>
<div class="t" style="left:594px;top:433px;color:#f8d860;font-weight:bold;font-size:12px;letter-spacing:.4px">(0,0)</div>
<div class="t" style="left:774px;top:646px;color:#fff;font-weight:bold;letter-spacing:.5px">(90,0)</div>
<svg style="left:0;top:0" width="1024" height="742"><g fill="#c8c8c8" stroke="none"><path class="th" d="M782.4 679 Q790 669 797 664.5"/><path d="M796.6 664.0 L790.4 672.1 L784.6 689.5 L791.4 691.5 L795.6 673.9 L798.4 665.0 Z"/><path class="th" d="M790 681 Q801 667 807 664.5 Q812 663 812.5 666"/><path d="M811.6 665.1 L806.4 673.1 L800.7 689.5 L807.3 691.5 L811.6 674.9 L813.4 665.9 Z"/><path class="th" d="M807 681 Q819 667 827 664.5 Q833 663 833 667"/><path d="M832.1 665.6 L826.4 675.1 L823.8 685.4 L828.2 686.6 L831.6 676.9 L833.9 666.4 Z"/><path class="c" d="M826 685 Q826 691 831 690.5 Q838 690 845 684"/><path class="c" d="M866 667 Q859 662 850 666 Q841 673 842 683 Q844 691 853 690.5 Q862 690 869.5 678" /><path d="M850.4 666.0 L842.8 671.8 L840.3 681.2 L844.9 688.5 L847.1 687.5 L845.7 680.8 L847.2 674.2 L851.6 667.0 Z"/><circle cx="864.5" cy="670.5" r="2.8"/><path class="th" d="M909 622 Q894 620 883 632 Q876 641 879 650 Q882 657 890 657.5 Q900 657 905 648 Q908 642 907 637"/><path d="M886.2 658.0 L898.0 657.0 L905.1 650.3 L907.2 640.4 L904.8 639.6 L900.9 647.7 L896.0 653.0 L885.8 656.0 Z"/><path d="M906.7 622.5 L913.6 625.8 L917.6 632.8 L916.6 644.1 L908.5 667.0 L900.3 691.7 L901.7 692.3 L913.5 669.0 L923.4 645.9 L924.4 631.2 L916.4 622.2 L907.3 620.5 Z"/><path class="th" d="M901 692 L962 623"/><path class="th" d="M920 648 Q930 636 937 627 Q942 620 943.5 623 Q943 632 928 640"/><path d="M961.1 622.5 L947.1 643.5 L934.9 666.4 L925.1 691.6 L926.9 692.4 L941.1 669.6 L952.9 646.5 L962.9 623.5 Z"/><path class="th" d="M926 692 L991 628"/><circle cx="994.5" cy="626.5" r="3.6"/><circle cx="981.3" cy="648" r="2.9"/><path class="th" d="M958 678 Q966 668 972.5 665"/><path d="M972.1 664.6 L964.5 675.8 L960.2 687.2 L963.8 688.8 L969.5 678.2 L973.9 665.4 Z"/><path class="th" d="M962 687 Q962 691 967 689 Q973 685 979 676"/><path d="M1006.4 644.7 L992.2 664.3 L981.3 685.0 L984.7 687.0 L997.8 667.7 L1009.0 646.3 Z"/><path class="th" d="M983 685 Q981 692 988 689 Q995 684 1000.5 678"/><path class="th" d="M991.5 655.3 L1013.5 656"/></g></svg>
<svg style="left:837px;top:393px" width="12" height="19" shape-rendering="crispEdges"><path d="M0 0V13L3 10L6.5 17.5L8.5 16.5L5.5 9.5H9Z" fill="#fff"/></svg>
<div class="sunk" style="left:652px;top:704px;width:146px;height:16px"></div>
<div class="t" style="left:654px;top:706px">Angles : (-20, -331, 0)</div>
<div class="sunk" style="left:800px;top:704px;width:166px;height:16px"></div>
<div class="t" style="left:802px;top:706px;letter-spacing:.15px">Scale : (100%, 100%, 100%)</div>
<div class="sunk" style="left:968px;top:704px;width:56px;height:16px"></div>
<div class="t" style="left:970px;top:706px">100%</div>
<div class="t" style="left:2px;top:724px">Ready</div>
<div class="sunk" style="left:935px;top:722px;width:26px;height:16px"></div>
<div class="sunk" style="left:963px;top:722px;width:28px;height:16px"></div>
<div class="t" style="left:965px;top:724px;letter-spacing:-.8px">NUM</div>
<div class="sunk" style="left:993px;top:722px;width:31px;height:16px"></div>
<div class="hl" style="left:0;top:739px;width:1024px;background:#fff"></div>
</body></html>
